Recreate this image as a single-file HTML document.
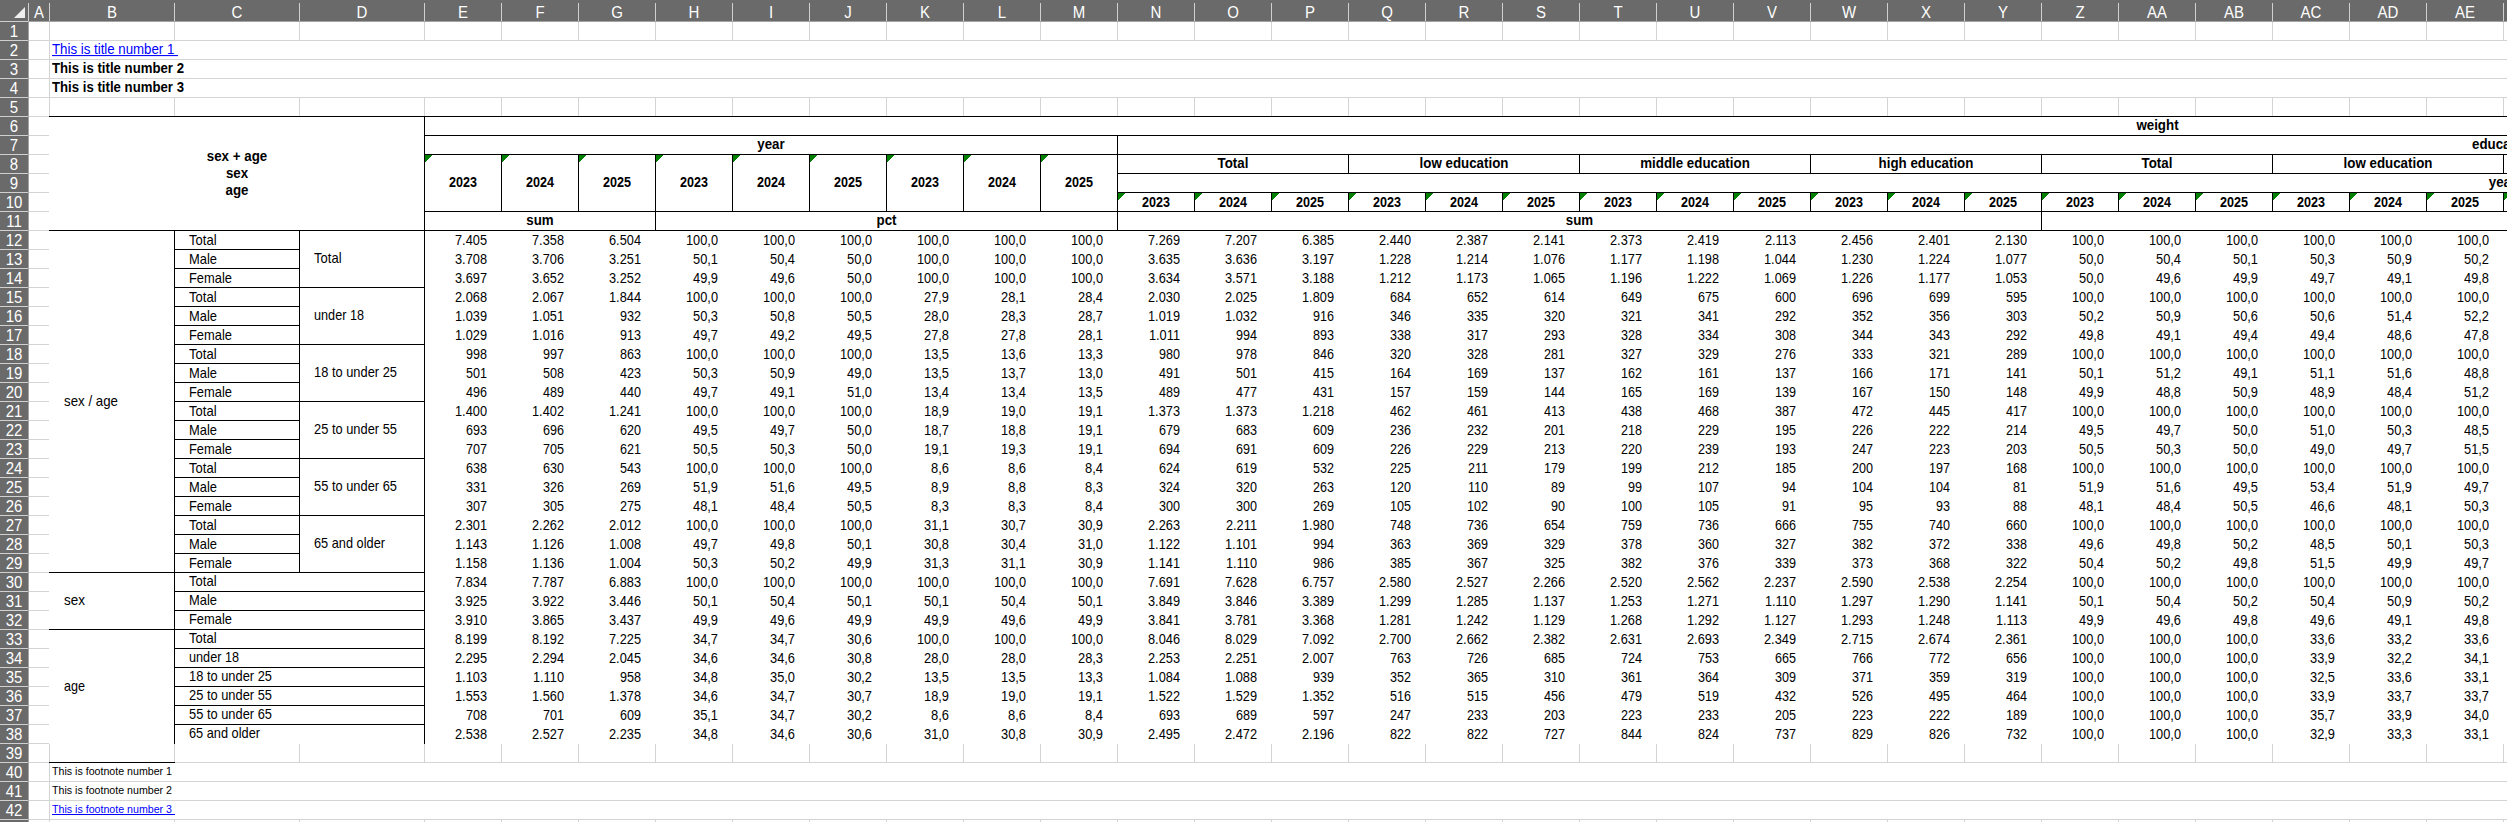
<!DOCTYPE html>
<html><head><meta charset="utf-8"><title>Sheet</title><style>
html,body{margin:0;padding:0}
body{width:2507px;height:822px;position:relative;overflow:hidden;background:#fff;font-family:"Liberation Sans",sans-serif}
i,b{position:absolute;display:block}
i.g{background:#d4d4d4}i.w{background:#fff}i.h{background:#6a6a6a}i.l{background:#d0d0d0}i.m{background:#a3a3a3}i.k{background:#000}
b{white-space:nowrap;line-height:19px;height:19px;font-weight:normal;color:#000;font-size:13.33px}
b.hd{font-size:15px;color:#fff;text-align:center;transform:scaleY(1.05);transform-origin:50% 15px}
b.fn{font-size:10.8px}
b.lk{color:#00f}
b.bd,b.bn{font-weight:bold}
b.ol{transform-origin:0 14px}b.oc{transform-origin:50% 14px}b.or{transform-origin:100% 14px}
b.c{text-align:center}
b.rt{width:86px;text-align:right}
u{text-decoration:underline}
</style></head><body>
<i class="g" style="left:29px;top:40px;width:2478px;height:1px"></i><i class="g" style="left:29px;top:59px;width:2478px;height:1px"></i><i class="g" style="left:29px;top:78px;width:2478px;height:1px"></i><i class="g" style="left:29px;top:97px;width:2478px;height:1px"></i><i class="g" style="left:29px;top:116px;width:2478px;height:1px"></i><i class="g" style="left:29px;top:135px;width:2478px;height:1px"></i><i class="g" style="left:29px;top:154px;width:2478px;height:1px"></i><i class="g" style="left:29px;top:173px;width:2478px;height:1px"></i><i class="g" style="left:29px;top:192px;width:2478px;height:1px"></i><i class="g" style="left:29px;top:211px;width:2478px;height:1px"></i><i class="g" style="left:29px;top:230px;width:2478px;height:1px"></i><i class="g" style="left:29px;top:249px;width:2478px;height:1px"></i><i class="g" style="left:29px;top:268px;width:2478px;height:1px"></i><i class="g" style="left:29px;top:287px;width:2478px;height:1px"></i><i class="g" style="left:29px;top:306px;width:2478px;height:1px"></i><i class="g" style="left:29px;top:325px;width:2478px;height:1px"></i><i class="g" style="left:29px;top:344px;width:2478px;height:1px"></i><i class="g" style="left:29px;top:363px;width:2478px;height:1px"></i><i class="g" style="left:29px;top:382px;width:2478px;height:1px"></i><i class="g" style="left:29px;top:401px;width:2478px;height:1px"></i><i class="g" style="left:29px;top:420px;width:2478px;height:1px"></i><i class="g" style="left:29px;top:439px;width:2478px;height:1px"></i><i class="g" style="left:29px;top:458px;width:2478px;height:1px"></i><i class="g" style="left:29px;top:477px;width:2478px;height:1px"></i><i class="g" style="left:29px;top:496px;width:2478px;height:1px"></i><i class="g" style="left:29px;top:515px;width:2478px;height:1px"></i><i class="g" style="left:29px;top:534px;width:2478px;height:1px"></i><i class="g" style="left:29px;top:553px;width:2478px;height:1px"></i><i class="g" style="left:29px;top:572px;width:2478px;height:1px"></i><i class="g" style="left:29px;top:591px;width:2478px;height:1px"></i><i class="g" style="left:29px;top:610px;width:2478px;height:1px"></i><i class="g" style="left:29px;top:629px;width:2478px;height:1px"></i><i class="g" style="left:29px;top:648px;width:2478px;height:1px"></i><i class="g" style="left:29px;top:667px;width:2478px;height:1px"></i><i class="g" style="left:29px;top:686px;width:2478px;height:1px"></i><i class="g" style="left:29px;top:705px;width:2478px;height:1px"></i><i class="g" style="left:29px;top:724px;width:2478px;height:1px"></i><i class="g" style="left:29px;top:743px;width:2478px;height:1px"></i><i class="g" style="left:29px;top:762px;width:2478px;height:1px"></i><i class="g" style="left:29px;top:781px;width:2478px;height:1px"></i><i class="g" style="left:29px;top:800px;width:2478px;height:1px"></i><i class="g" style="left:29px;top:819px;width:2478px;height:1px"></i><i class="g" style="left:29px;top:838px;width:2478px;height:1px"></i><i class="g" style="left:49px;top:22px;width:1px;height:800px"></i><i class="g" style="left:174px;top:22px;width:1px;height:800px"></i><i class="g" style="left:299px;top:22px;width:1px;height:800px"></i><i class="g" style="left:424px;top:22px;width:1px;height:800px"></i><i class="g" style="left:501px;top:22px;width:1px;height:800px"></i><i class="g" style="left:578px;top:22px;width:1px;height:800px"></i><i class="g" style="left:655px;top:22px;width:1px;height:800px"></i><i class="g" style="left:732px;top:22px;width:1px;height:800px"></i><i class="g" style="left:809px;top:22px;width:1px;height:800px"></i><i class="g" style="left:886px;top:22px;width:1px;height:800px"></i><i class="g" style="left:963px;top:22px;width:1px;height:800px"></i><i class="g" style="left:1040px;top:22px;width:1px;height:800px"></i><i class="g" style="left:1117px;top:22px;width:1px;height:800px"></i><i class="g" style="left:1194px;top:22px;width:1px;height:800px"></i><i class="g" style="left:1271px;top:22px;width:1px;height:800px"></i><i class="g" style="left:1348px;top:22px;width:1px;height:800px"></i><i class="g" style="left:1425px;top:22px;width:1px;height:800px"></i><i class="g" style="left:1502px;top:22px;width:1px;height:800px"></i><i class="g" style="left:1579px;top:22px;width:1px;height:800px"></i><i class="g" style="left:1656px;top:22px;width:1px;height:800px"></i><i class="g" style="left:1733px;top:22px;width:1px;height:800px"></i><i class="g" style="left:1810px;top:22px;width:1px;height:800px"></i><i class="g" style="left:1887px;top:22px;width:1px;height:800px"></i><i class="g" style="left:1964px;top:22px;width:1px;height:800px"></i><i class="g" style="left:2041px;top:22px;width:1px;height:800px"></i><i class="g" style="left:2118px;top:22px;width:1px;height:800px"></i><i class="g" style="left:2195px;top:22px;width:1px;height:800px"></i><i class="g" style="left:2272px;top:22px;width:1px;height:800px"></i><i class="g" style="left:2349px;top:22px;width:1px;height:800px"></i><i class="g" style="left:2426px;top:22px;width:1px;height:800px"></i><i class="g" style="left:2503px;top:22px;width:1px;height:800px"></i><i class="w" style="left:50px;top:41px;width:2457px;height:56px"></i><i class="g" style="left:50px;top:59px;width:2457px;height:1px"></i><i class="g" style="left:50px;top:78px;width:2457px;height:1px"></i><i class="w" style="left:49px;top:117px;width:2458px;height:627px"></i><i class="w" style="left:50px;top:763px;width:2457px;height:56px"></i><i class="g" style="left:50px;top:781px;width:2457px;height:1px"></i><i class="g" style="left:50px;top:800px;width:2457px;height:1px"></i><i class="h" style="left:0px;top:0px;width:2507px;height:21px"></i><i class="h" style="left:0px;top:0px;width:28px;height:822px"></i><i class="l" style="left:0px;top:21px;width:28px;height:1px"></i><i class="m" style="left:28px;top:21px;width:2479px;height:1px"></i><i class="l" style="left:28px;top:3px;width:1px;height:18px"></i><i class="m" style="left:28px;top:21px;width:1px;height:801px"></i><i class="l" style="left:49px;top:3px;width:1px;height:18px"></i><i class="l" style="left:174px;top:3px;width:1px;height:18px"></i><i class="l" style="left:299px;top:3px;width:1px;height:18px"></i><i class="l" style="left:424px;top:3px;width:1px;height:18px"></i><i class="l" style="left:501px;top:3px;width:1px;height:18px"></i><i class="l" style="left:578px;top:3px;width:1px;height:18px"></i><i class="l" style="left:655px;top:3px;width:1px;height:18px"></i><i class="l" style="left:732px;top:3px;width:1px;height:18px"></i><i class="l" style="left:809px;top:3px;width:1px;height:18px"></i><i class="l" style="left:886px;top:3px;width:1px;height:18px"></i><i class="l" style="left:963px;top:3px;width:1px;height:18px"></i><i class="l" style="left:1040px;top:3px;width:1px;height:18px"></i><i class="l" style="left:1117px;top:3px;width:1px;height:18px"></i><i class="l" style="left:1194px;top:3px;width:1px;height:18px"></i><i class="l" style="left:1271px;top:3px;width:1px;height:18px"></i><i class="l" style="left:1348px;top:3px;width:1px;height:18px"></i><i class="l" style="left:1425px;top:3px;width:1px;height:18px"></i><i class="l" style="left:1502px;top:3px;width:1px;height:18px"></i><i class="l" style="left:1579px;top:3px;width:1px;height:18px"></i><i class="l" style="left:1656px;top:3px;width:1px;height:18px"></i><i class="l" style="left:1733px;top:3px;width:1px;height:18px"></i><i class="l" style="left:1810px;top:3px;width:1px;height:18px"></i><i class="l" style="left:1887px;top:3px;width:1px;height:18px"></i><i class="l" style="left:1964px;top:3px;width:1px;height:18px"></i><i class="l" style="left:2041px;top:3px;width:1px;height:18px"></i><i class="l" style="left:2118px;top:3px;width:1px;height:18px"></i><i class="l" style="left:2195px;top:3px;width:1px;height:18px"></i><i class="l" style="left:2272px;top:3px;width:1px;height:18px"></i><i class="l" style="left:2349px;top:3px;width:1px;height:18px"></i><i class="l" style="left:2426px;top:3px;width:1px;height:18px"></i><i class="l" style="left:2503px;top:3px;width:1px;height:18px"></i><i class="l" style="left:0px;top:40px;width:28px;height:1px"></i><i class="l" style="left:0px;top:59px;width:28px;height:1px"></i><i class="l" style="left:0px;top:78px;width:28px;height:1px"></i><i class="l" style="left:0px;top:97px;width:28px;height:1px"></i><i class="l" style="left:0px;top:116px;width:28px;height:1px"></i><i class="l" style="left:0px;top:135px;width:28px;height:1px"></i><i class="l" style="left:0px;top:154px;width:28px;height:1px"></i><i class="l" style="left:0px;top:173px;width:28px;height:1px"></i><i class="l" style="left:0px;top:192px;width:28px;height:1px"></i><i class="l" style="left:0px;top:211px;width:28px;height:1px"></i><i class="l" style="left:0px;top:230px;width:28px;height:1px"></i><i class="l" style="left:0px;top:249px;width:28px;height:1px"></i><i class="l" style="left:0px;top:268px;width:28px;height:1px"></i><i class="l" style="left:0px;top:287px;width:28px;height:1px"></i><i class="l" style="left:0px;top:306px;width:28px;height:1px"></i><i class="l" style="left:0px;top:325px;width:28px;height:1px"></i><i class="l" style="left:0px;top:344px;width:28px;height:1px"></i><i class="l" style="left:0px;top:363px;width:28px;height:1px"></i><i class="l" style="left:0px;top:382px;width:28px;height:1px"></i><i class="l" style="left:0px;top:401px;width:28px;height:1px"></i><i class="l" style="left:0px;top:420px;width:28px;height:1px"></i><i class="l" style="left:0px;top:439px;width:28px;height:1px"></i><i class="l" style="left:0px;top:458px;width:28px;height:1px"></i><i class="l" style="left:0px;top:477px;width:28px;height:1px"></i><i class="l" style="left:0px;top:496px;width:28px;height:1px"></i><i class="l" style="left:0px;top:515px;width:28px;height:1px"></i><i class="l" style="left:0px;top:534px;width:28px;height:1px"></i><i class="l" style="left:0px;top:553px;width:28px;height:1px"></i><i class="l" style="left:0px;top:572px;width:28px;height:1px"></i><i class="l" style="left:0px;top:591px;width:28px;height:1px"></i><i class="l" style="left:0px;top:610px;width:28px;height:1px"></i><i class="l" style="left:0px;top:629px;width:28px;height:1px"></i><i class="l" style="left:0px;top:648px;width:28px;height:1px"></i><i class="l" style="left:0px;top:667px;width:28px;height:1px"></i><i class="l" style="left:0px;top:686px;width:28px;height:1px"></i><i class="l" style="left:0px;top:705px;width:28px;height:1px"></i><i class="l" style="left:0px;top:724px;width:28px;height:1px"></i><i class="l" style="left:0px;top:743px;width:28px;height:1px"></i><i class="l" style="left:0px;top:762px;width:28px;height:1px"></i><i class="l" style="left:0px;top:781px;width:28px;height:1px"></i><i class="l" style="left:0px;top:800px;width:28px;height:1px"></i><i class="l" style="left:0px;top:819px;width:28px;height:1px"></i><i class="l" style="left:0px;top:838px;width:28px;height:1px"></i><i class="k" style="left:49px;top:116px;width:2458px;height:1px"></i><i class="k" style="left:424px;top:116px;width:1px;height:115px"></i><i class="k" style="left:49px;top:230px;width:2458px;height:1px"></i><i class="k" style="left:424px;top:135px;width:2083px;height:1px"></i><i class="k" style="left:424px;top:154px;width:2083px;height:1px"></i><i class="k" style="left:1117px;top:135px;width:1px;height:96px"></i><i class="k" style="left:501px;top:154px;width:1px;height:58px"></i><i class="k" style="left:578px;top:154px;width:1px;height:58px"></i><i class="k" style="left:655px;top:154px;width:1px;height:58px"></i><i class="k" style="left:732px;top:154px;width:1px;height:58px"></i><i class="k" style="left:809px;top:154px;width:1px;height:58px"></i><i class="k" style="left:886px;top:154px;width:1px;height:58px"></i><i class="k" style="left:963px;top:154px;width:1px;height:58px"></i><i class="k" style="left:1040px;top:154px;width:1px;height:58px"></i><i class="k" style="left:1117px;top:154px;width:1px;height:58px"></i><i class="k" style="left:424px;top:211px;width:2083px;height:1px"></i><i class="k" style="left:1117px;top:173px;width:1390px;height:1px"></i><i class="k" style="left:1348px;top:154px;width:1px;height:20px"></i><i class="k" style="left:1579px;top:154px;width:1px;height:20px"></i><i class="k" style="left:1810px;top:154px;width:1px;height:20px"></i><i class="k" style="left:2041px;top:154px;width:1px;height:20px"></i><i class="k" style="left:2272px;top:154px;width:1px;height:20px"></i><i class="k" style="left:2503px;top:154px;width:1px;height:20px"></i><i class="k" style="left:1117px;top:192px;width:1390px;height:1px"></i><i class="k" style="left:1194px;top:192px;width:1px;height:20px"></i><i class="k" style="left:1271px;top:192px;width:1px;height:20px"></i><i class="k" style="left:1348px;top:192px;width:1px;height:20px"></i><i class="k" style="left:1425px;top:192px;width:1px;height:20px"></i><i class="k" style="left:1502px;top:192px;width:1px;height:20px"></i><i class="k" style="left:1579px;top:192px;width:1px;height:20px"></i><i class="k" style="left:1656px;top:192px;width:1px;height:20px"></i><i class="k" style="left:1733px;top:192px;width:1px;height:20px"></i><i class="k" style="left:1810px;top:192px;width:1px;height:20px"></i><i class="k" style="left:1887px;top:192px;width:1px;height:20px"></i><i class="k" style="left:1964px;top:192px;width:1px;height:20px"></i><i class="k" style="left:2041px;top:192px;width:1px;height:20px"></i><i class="k" style="left:2118px;top:192px;width:1px;height:20px"></i><i class="k" style="left:2195px;top:192px;width:1px;height:20px"></i><i class="k" style="left:2272px;top:192px;width:1px;height:20px"></i><i class="k" style="left:2349px;top:192px;width:1px;height:20px"></i><i class="k" style="left:2426px;top:192px;width:1px;height:20px"></i><i class="k" style="left:2503px;top:192px;width:1px;height:20px"></i><i class="k" style="left:655px;top:211px;width:1px;height:20px"></i><i class="k" style="left:2041px;top:211px;width:1px;height:20px"></i><i class="k" style="left:174px;top:230px;width:1px;height:514px"></i><i class="k" style="left:424px;top:230px;width:1px;height:514px"></i><i class="k" style="left:299px;top:230px;width:1px;height:343px"></i><i class="k" style="left:174px;top:249px;width:126px;height:1px"></i><i class="k" style="left:174px;top:268px;width:126px;height:1px"></i><i class="k" style="left:174px;top:287px;width:126px;height:1px"></i><i class="k" style="left:174px;top:306px;width:126px;height:1px"></i><i class="k" style="left:174px;top:325px;width:126px;height:1px"></i><i class="k" style="left:174px;top:344px;width:126px;height:1px"></i><i class="k" style="left:174px;top:363px;width:126px;height:1px"></i><i class="k" style="left:174px;top:382px;width:126px;height:1px"></i><i class="k" style="left:174px;top:401px;width:126px;height:1px"></i><i class="k" style="left:174px;top:420px;width:126px;height:1px"></i><i class="k" style="left:174px;top:439px;width:126px;height:1px"></i><i class="k" style="left:174px;top:458px;width:126px;height:1px"></i><i class="k" style="left:174px;top:477px;width:126px;height:1px"></i><i class="k" style="left:174px;top:496px;width:126px;height:1px"></i><i class="k" style="left:174px;top:515px;width:126px;height:1px"></i><i class="k" style="left:174px;top:534px;width:126px;height:1px"></i><i class="k" style="left:174px;top:553px;width:126px;height:1px"></i><i class="k" style="left:174px;top:572px;width:126px;height:1px"></i><i class="k" style="left:299px;top:287px;width:126px;height:1px"></i><i class="k" style="left:299px;top:344px;width:126px;height:1px"></i><i class="k" style="left:299px;top:401px;width:126px;height:1px"></i><i class="k" style="left:299px;top:458px;width:126px;height:1px"></i><i class="k" style="left:299px;top:515px;width:126px;height:1px"></i><i class="k" style="left:299px;top:572px;width:126px;height:1px"></i><i class="k" style="left:49px;top:572px;width:126px;height:1px"></i><i class="k" style="left:174px;top:591px;width:251px;height:1px"></i><i class="k" style="left:174px;top:610px;width:251px;height:1px"></i><i class="k" style="left:174px;top:629px;width:251px;height:1px"></i><i class="k" style="left:49px;top:629px;width:126px;height:1px"></i><i class="k" style="left:174px;top:648px;width:251px;height:1px"></i><i class="k" style="left:174px;top:667px;width:251px;height:1px"></i><i class="k" style="left:174px;top:686px;width:251px;height:1px"></i><i class="k" style="left:174px;top:705px;width:251px;height:1px"></i><i class="k" style="left:174px;top:724px;width:251px;height:1px"></i><i class="k" style="left:49px;top:762px;width:126px;height:1px"></i>
<b class="hd" style="left:29px;top:3px;width:20px;">A</b><b class="hd" style="left:50px;top:3px;width:124px;">B</b><b class="hd" style="left:175px;top:3px;width:124px;">C</b><b class="hd" style="left:300px;top:3px;width:124px;">D</b><b class="hd" style="left:425px;top:3px;width:76px;">E</b><b class="hd" style="left:502px;top:3px;width:76px;">F</b><b class="hd" style="left:579px;top:3px;width:76px;">G</b><b class="hd" style="left:656px;top:3px;width:76px;">H</b><b class="hd" style="left:733px;top:3px;width:76px;">I</b><b class="hd" style="left:810px;top:3px;width:76px;">J</b><b class="hd" style="left:887px;top:3px;width:76px;">K</b><b class="hd" style="left:964px;top:3px;width:76px;">L</b><b class="hd" style="left:1041px;top:3px;width:76px;">M</b><b class="hd" style="left:1118px;top:3px;width:76px;">N</b><b class="hd" style="left:1195px;top:3px;width:76px;">O</b><b class="hd" style="left:1272px;top:3px;width:76px;">P</b><b class="hd" style="left:1349px;top:3px;width:76px;">Q</b><b class="hd" style="left:1426px;top:3px;width:76px;">R</b><b class="hd" style="left:1503px;top:3px;width:76px;">S</b><b class="hd" style="left:1580px;top:3px;width:76px;">T</b><b class="hd" style="left:1657px;top:3px;width:76px;">U</b><b class="hd" style="left:1734px;top:3px;width:76px;">V</b><b class="hd" style="left:1811px;top:3px;width:76px;">W</b><b class="hd" style="left:1888px;top:3px;width:76px;">X</b><b class="hd" style="left:1965px;top:3px;width:76px;">Y</b><b class="hd" style="left:2042px;top:3px;width:76px;">Z</b><b class="hd" style="left:2119px;top:3px;width:76px;">AA</b><b class="hd" style="left:2196px;top:3px;width:76px;">AB</b><b class="hd" style="left:2273px;top:3px;width:76px;">AC</b><b class="hd" style="left:2350px;top:3px;width:76px;">AD</b><b class="hd" style="left:2427px;top:3px;width:76px;">AE</b><b class="hd" style="left:0px;top:22px;width:28px;">1</b><b class="hd" style="left:0px;top:41px;width:28px;">2</b><b class="hd" style="left:0px;top:60px;width:28px;">3</b><b class="hd" style="left:0px;top:79px;width:28px;">4</b><b class="hd" style="left:0px;top:98px;width:28px;">5</b><b class="hd" style="left:0px;top:117px;width:28px;">6</b><b class="hd" style="left:0px;top:136px;width:28px;">7</b><b class="hd" style="left:0px;top:155px;width:28px;">8</b><b class="hd" style="left:0px;top:174px;width:28px;">9</b><b class="hd" style="left:0px;top:193px;width:28px;">10</b><b class="hd" style="left:0px;top:212px;width:28px;">11</b><b class="hd" style="left:0px;top:231px;width:28px;">12</b><b class="hd" style="left:0px;top:250px;width:28px;">13</b><b class="hd" style="left:0px;top:269px;width:28px;">14</b><b class="hd" style="left:0px;top:288px;width:28px;">15</b><b class="hd" style="left:0px;top:307px;width:28px;">16</b><b class="hd" style="left:0px;top:326px;width:28px;">17</b><b class="hd" style="left:0px;top:345px;width:28px;">18</b><b class="hd" style="left:0px;top:364px;width:28px;">19</b><b class="hd" style="left:0px;top:383px;width:28px;">20</b><b class="hd" style="left:0px;top:402px;width:28px;">21</b><b class="hd" style="left:0px;top:421px;width:28px;">22</b><b class="hd" style="left:0px;top:440px;width:28px;">23</b><b class="hd" style="left:0px;top:459px;width:28px;">24</b><b class="hd" style="left:0px;top:478px;width:28px;">25</b><b class="hd" style="left:0px;top:497px;width:28px;">26</b><b class="hd" style="left:0px;top:516px;width:28px;">27</b><b class="hd" style="left:0px;top:535px;width:28px;">28</b><b class="hd" style="left:0px;top:554px;width:28px;">29</b><b class="hd" style="left:0px;top:573px;width:28px;">30</b><b class="hd" style="left:0px;top:592px;width:28px;">31</b><b class="hd" style="left:0px;top:611px;width:28px;">32</b><b class="hd" style="left:0px;top:630px;width:28px;">33</b><b class="hd" style="left:0px;top:649px;width:28px;">34</b><b class="hd" style="left:0px;top:668px;width:28px;">35</b><b class="hd" style="left:0px;top:687px;width:28px;">36</b><b class="hd" style="left:0px;top:706px;width:28px;">37</b><b class="hd" style="left:0px;top:725px;width:28px;">38</b><b class="hd" style="left:0px;top:744px;width:28px;">39</b><b class="hd" style="left:0px;top:763px;width:28px;">40</b><b class="hd" style="left:0px;top:782px;width:28px;">41</b><b class="hd" style="left:0px;top:801px;width:28px;">42</b><b class="hd" style="left:0px;top:820px;width:28px;">43</b><svg style="position:absolute;left:0;top:0" width="28" height="21"><polygon points="25,7 25,18 14,18" fill="#efefef"/></svg><b class="t r ol lk" style="left:52px;top:40px;transform:scale(0.995,1.05);"><u>This is title number 1&nbsp;</u></b><b class="t bd ol" style="left:52px;top:59px;transform:scale(0.990,1.05);">This is title number 2</b><b class="t bd ol" style="left:52px;top:78px;transform:scale(0.990,1.05);">This is title number 3</b><svg style="position:absolute;left:425px;top:155px" width="7" height="7" shape-rendering="crispEdges"><polygon points="0,0 7,0 0,7" fill="#008000"/></svg><svg style="position:absolute;left:502px;top:155px" width="7" height="7" shape-rendering="crispEdges"><polygon points="0,0 7,0 0,7" fill="#008000"/></svg><svg style="position:absolute;left:579px;top:155px" width="7" height="7" shape-rendering="crispEdges"><polygon points="0,0 7,0 0,7" fill="#008000"/></svg><svg style="position:absolute;left:656px;top:155px" width="7" height="7" shape-rendering="crispEdges"><polygon points="0,0 7,0 0,7" fill="#008000"/></svg><svg style="position:absolute;left:733px;top:155px" width="7" height="7" shape-rendering="crispEdges"><polygon points="0,0 7,0 0,7" fill="#008000"/></svg><svg style="position:absolute;left:810px;top:155px" width="7" height="7" shape-rendering="crispEdges"><polygon points="0,0 7,0 0,7" fill="#008000"/></svg><svg style="position:absolute;left:887px;top:155px" width="7" height="7" shape-rendering="crispEdges"><polygon points="0,0 7,0 0,7" fill="#008000"/></svg><svg style="position:absolute;left:964px;top:155px" width="7" height="7" shape-rendering="crispEdges"><polygon points="0,0 7,0 0,7" fill="#008000"/></svg><svg style="position:absolute;left:1041px;top:155px" width="7" height="7" shape-rendering="crispEdges"><polygon points="0,0 7,0 0,7" fill="#008000"/></svg><svg style="position:absolute;left:1118px;top:193px" width="7" height="7" shape-rendering="crispEdges"><polygon points="0,0 7,0 0,7" fill="#008000"/></svg><svg style="position:absolute;left:1195px;top:193px" width="7" height="7" shape-rendering="crispEdges"><polygon points="0,0 7,0 0,7" fill="#008000"/></svg><svg style="position:absolute;left:1272px;top:193px" width="7" height="7" shape-rendering="crispEdges"><polygon points="0,0 7,0 0,7" fill="#008000"/></svg><svg style="position:absolute;left:1349px;top:193px" width="7" height="7" shape-rendering="crispEdges"><polygon points="0,0 7,0 0,7" fill="#008000"/></svg><svg style="position:absolute;left:1426px;top:193px" width="7" height="7" shape-rendering="crispEdges"><polygon points="0,0 7,0 0,7" fill="#008000"/></svg><svg style="position:absolute;left:1503px;top:193px" width="7" height="7" shape-rendering="crispEdges"><polygon points="0,0 7,0 0,7" fill="#008000"/></svg><svg style="position:absolute;left:1580px;top:193px" width="7" height="7" shape-rendering="crispEdges"><polygon points="0,0 7,0 0,7" fill="#008000"/></svg><svg style="position:absolute;left:1657px;top:193px" width="7" height="7" shape-rendering="crispEdges"><polygon points="0,0 7,0 0,7" fill="#008000"/></svg><svg style="position:absolute;left:1734px;top:193px" width="7" height="7" shape-rendering="crispEdges"><polygon points="0,0 7,0 0,7" fill="#008000"/></svg><svg style="position:absolute;left:1811px;top:193px" width="7" height="7" shape-rendering="crispEdges"><polygon points="0,0 7,0 0,7" fill="#008000"/></svg><svg style="position:absolute;left:1888px;top:193px" width="7" height="7" shape-rendering="crispEdges"><polygon points="0,0 7,0 0,7" fill="#008000"/></svg><svg style="position:absolute;left:1965px;top:193px" width="7" height="7" shape-rendering="crispEdges"><polygon points="0,0 7,0 0,7" fill="#008000"/></svg><svg style="position:absolute;left:2042px;top:193px" width="7" height="7" shape-rendering="crispEdges"><polygon points="0,0 7,0 0,7" fill="#008000"/></svg><svg style="position:absolute;left:2119px;top:193px" width="7" height="7" shape-rendering="crispEdges"><polygon points="0,0 7,0 0,7" fill="#008000"/></svg><svg style="position:absolute;left:2196px;top:193px" width="7" height="7" shape-rendering="crispEdges"><polygon points="0,0 7,0 0,7" fill="#008000"/></svg><svg style="position:absolute;left:2273px;top:193px" width="7" height="7" shape-rendering="crispEdges"><polygon points="0,0 7,0 0,7" fill="#008000"/></svg><svg style="position:absolute;left:2350px;top:193px" width="7" height="7" shape-rendering="crispEdges"><polygon points="0,0 7,0 0,7" fill="#008000"/></svg><svg style="position:absolute;left:2427px;top:193px" width="7" height="7" shape-rendering="crispEdges"><polygon points="0,0 7,0 0,7" fill="#008000"/></svg><svg style="position:absolute;left:2504px;top:193px" width="7" height="7" shape-rendering="crispEdges"><polygon points="0,0 7,0 0,7" fill="#008000"/></svg><b class="t bd oc c" style="left:50px;top:147px;width:374px;transform:scale(1.000,1.05);">sex + age</b><b class="t bd oc c" style="left:50px;top:164px;width:374px;transform:scale(1.000,1.05);">sex</b><b class="t bd oc c" style="left:50px;top:181px;width:374px;transform:scale(1.000,1.05);">age</b><b class="t bd oc c" style="left:425px;top:116px;width:3465px;transform:scale(1.000,1.05);">weight</b><b class="t bd oc c" style="left:425px;top:135px;width:692px;transform:scale(1.000,1.05);">year</b><b class="t bd oc c" style="left:1118px;top:135px;width:2771px;transform:scale(1.000,1.05);">education</b><b class="t bn oc c" style="left:425px;top:173px;width:76px;transform:scale(0.944,1.05);">2023</b><b class="t bn oc c" style="left:502px;top:173px;width:76px;transform:scale(0.944,1.05);">2024</b><b class="t bn oc c" style="left:579px;top:173px;width:76px;transform:scale(0.944,1.05);">2025</b><b class="t bn oc c" style="left:656px;top:173px;width:76px;transform:scale(0.944,1.05);">2023</b><b class="t bn oc c" style="left:733px;top:173px;width:76px;transform:scale(0.944,1.05);">2024</b><b class="t bn oc c" style="left:810px;top:173px;width:76px;transform:scale(0.944,1.05);">2025</b><b class="t bn oc c" style="left:887px;top:173px;width:76px;transform:scale(0.944,1.05);">2023</b><b class="t bn oc c" style="left:964px;top:173px;width:76px;transform:scale(0.944,1.05);">2024</b><b class="t bn oc c" style="left:1041px;top:173px;width:76px;transform:scale(0.944,1.05);">2025</b><b class="t bd oc c" style="left:1118px;top:154px;width:230px;transform:scale(1.000,1.05);">Total</b><b class="t bd oc c" style="left:1349px;top:154px;width:230px;transform:scale(1.000,1.05);">low education</b><b class="t bd oc c" style="left:1580px;top:154px;width:230px;transform:scale(1.000,1.05);">middle education</b><b class="t bd oc c" style="left:1811px;top:154px;width:230px;transform:scale(1.000,1.05);">high education</b><b class="t bd oc c" style="left:2042px;top:154px;width:230px;transform:scale(1.000,1.05);">Total</b><b class="t bd oc c" style="left:2273px;top:154px;width:230px;transform:scale(1.000,1.05);">low education</b><b class="t bd oc c" style="left:2504px;top:154px;width:230px;transform:scale(1.000,1.05);">middle education</b><b class="t bd oc c" style="left:1118px;top:173px;width:2769px;transform:scale(1.000,1.05);">year</b><b class="t bn oc c" style="left:1118px;top:193px;width:76px;transform:scale(0.944,1.05);">2023</b><b class="t bn oc c" style="left:1195px;top:193px;width:76px;transform:scale(0.944,1.05);">2024</b><b class="t bn oc c" style="left:1272px;top:193px;width:76px;transform:scale(0.944,1.05);">2025</b><b class="t bn oc c" style="left:1349px;top:193px;width:76px;transform:scale(0.944,1.05);">2023</b><b class="t bn oc c" style="left:1426px;top:193px;width:76px;transform:scale(0.944,1.05);">2024</b><b class="t bn oc c" style="left:1503px;top:193px;width:76px;transform:scale(0.944,1.05);">2025</b><b class="t bn oc c" style="left:1580px;top:193px;width:76px;transform:scale(0.944,1.05);">2023</b><b class="t bn oc c" style="left:1657px;top:193px;width:76px;transform:scale(0.944,1.05);">2024</b><b class="t bn oc c" style="left:1734px;top:193px;width:76px;transform:scale(0.944,1.05);">2025</b><b class="t bn oc c" style="left:1811px;top:193px;width:76px;transform:scale(0.944,1.05);">2023</b><b class="t bn oc c" style="left:1888px;top:193px;width:76px;transform:scale(0.944,1.05);">2024</b><b class="t bn oc c" style="left:1965px;top:193px;width:76px;transform:scale(0.944,1.05);">2025</b><b class="t bn oc c" style="left:2042px;top:193px;width:76px;transform:scale(0.944,1.05);">2023</b><b class="t bn oc c" style="left:2119px;top:193px;width:76px;transform:scale(0.944,1.05);">2024</b><b class="t bn oc c" style="left:2196px;top:193px;width:76px;transform:scale(0.944,1.05);">2025</b><b class="t bn oc c" style="left:2273px;top:193px;width:76px;transform:scale(0.944,1.05);">2023</b><b class="t bn oc c" style="left:2350px;top:193px;width:76px;transform:scale(0.944,1.05);">2024</b><b class="t bn oc c" style="left:2427px;top:193px;width:76px;transform:scale(0.944,1.05);">2025</b><b class="t bd oc c" style="left:425px;top:211px;width:230px;transform:scale(1.000,1.05);">sum</b><b class="t bd oc c" style="left:656px;top:211px;width:461px;transform:scale(1.000,1.05);">pct</b><b class="t bd oc c" style="left:1118px;top:211px;width:923px;transform:scale(1.000,1.05);">sum</b><b class="t r ol" style="left:64px;top:392px;transform:scale(0.998,1.05);">sex / age</b><b class="t r ol" style="left:64px;top:591px;transform:scale(1.012,1.05);">sex</b><b class="t r ol" style="left:64px;top:677px;transform:scale(0.944,1.05);">age</b><b class="t r ol" style="left:189px;top:231px;transform:scale(0.979,1.05);">Total</b><b class="t r ol" style="left:189px;top:250px;transform:scale(0.969,1.05);">Male</b><b class="t r ol" style="left:189px;top:269px;transform:scale(0.967,1.05);">Female</b><b class="t r ol" style="left:314px;top:249px;transform:scale(0.979,1.05);">Total</b><b class="t r ol" style="left:189px;top:288px;transform:scale(0.979,1.05);">Total</b><b class="t r ol" style="left:189px;top:307px;transform:scale(0.969,1.05);">Male</b><b class="t r ol" style="left:189px;top:326px;transform:scale(0.967,1.05);">Female</b><b class="t r ol" style="left:314px;top:306px;transform:scale(0.950,1.05);">under 18</b><b class="t r ol" style="left:189px;top:345px;transform:scale(0.979,1.05);">Total</b><b class="t r ol" style="left:189px;top:364px;transform:scale(0.969,1.05);">Male</b><b class="t r ol" style="left:189px;top:383px;transform:scale(0.967,1.05);">Female</b><b class="t r ol" style="left:314px;top:363px;transform:scale(0.965,1.05);">18 to under 25</b><b class="t r ol" style="left:189px;top:402px;transform:scale(0.979,1.05);">Total</b><b class="t r ol" style="left:189px;top:421px;transform:scale(0.969,1.05);">Male</b><b class="t r ol" style="left:189px;top:440px;transform:scale(0.967,1.05);">Female</b><b class="t r ol" style="left:314px;top:420px;transform:scale(0.965,1.05);">25 to under 55</b><b class="t r ol" style="left:189px;top:459px;transform:scale(0.979,1.05);">Total</b><b class="t r ol" style="left:189px;top:478px;transform:scale(0.969,1.05);">Male</b><b class="t r ol" style="left:189px;top:497px;transform:scale(0.967,1.05);">Female</b><b class="t r ol" style="left:314px;top:477px;transform:scale(0.965,1.05);">55 to under 65</b><b class="t r ol" style="left:189px;top:516px;transform:scale(0.979,1.05);">Total</b><b class="t r ol" style="left:189px;top:535px;transform:scale(0.969,1.05);">Male</b><b class="t r ol" style="left:189px;top:554px;transform:scale(0.967,1.05);">Female</b><b class="t r ol" style="left:314px;top:534px;transform:scale(0.958,1.05);">65 and older</b><b class="t r ol" style="left:189px;top:572px;transform:scale(0.979,1.05);">Total</b><b class="t r ol" style="left:189px;top:591px;transform:scale(0.969,1.05);">Male</b><b class="t r ol" style="left:189px;top:610px;transform:scale(0.967,1.05);">Female</b><b class="t r ol" style="left:189px;top:629px;transform:scale(0.979,1.05);">Total</b><b class="t r ol" style="left:189px;top:648px;transform:scale(0.950,1.05);">under 18</b><b class="t r ol" style="left:189px;top:667px;transform:scale(0.965,1.05);">18 to under 25</b><b class="t r ol" style="left:189px;top:686px;transform:scale(0.965,1.05);">25 to under 55</b><b class="t r ol" style="left:189px;top:705px;transform:scale(0.965,1.05);">55 to under 65</b><b class="t r ol" style="left:189px;top:724px;transform:scale(0.958,1.05);">65 and older</b><b class="t n or rt" style="left:401px;top:231px;transform:scale(0.959,1.05);">7.405</b><b class="t n or rt" style="left:478px;top:231px;transform:scale(0.959,1.05);">7.358</b><b class="t n or rt" style="left:555px;top:231px;transform:scale(0.959,1.05);">6.504</b><b class="t n or rt" style="left:632px;top:231px;transform:scale(0.959,1.05);">100,0</b><b class="t n or rt" style="left:709px;top:231px;transform:scale(0.959,1.05);">100,0</b><b class="t n or rt" style="left:786px;top:231px;transform:scale(0.959,1.05);">100,0</b><b class="t n or rt" style="left:863px;top:231px;transform:scale(0.959,1.05);">100,0</b><b class="t n or rt" style="left:940px;top:231px;transform:scale(0.959,1.05);">100,0</b><b class="t n or rt" style="left:1017px;top:231px;transform:scale(0.959,1.05);">100,0</b><b class="t n or rt" style="left:1094px;top:231px;transform:scale(0.959,1.05);">7.269</b><b class="t n or rt" style="left:1171px;top:231px;transform:scale(0.959,1.05);">7.207</b><b class="t n or rt" style="left:1248px;top:231px;transform:scale(0.959,1.05);">6.385</b><b class="t n or rt" style="left:1325px;top:231px;transform:scale(0.959,1.05);">2.440</b><b class="t n or rt" style="left:1402px;top:231px;transform:scale(0.959,1.05);">2.387</b><b class="t n or rt" style="left:1479px;top:231px;transform:scale(0.959,1.05);">2.141</b><b class="t n or rt" style="left:1556px;top:231px;transform:scale(0.959,1.05);">2.373</b><b class="t n or rt" style="left:1633px;top:231px;transform:scale(0.959,1.05);">2.419</b><b class="t n or rt" style="left:1710px;top:231px;transform:scale(0.959,1.05);">2.113</b><b class="t n or rt" style="left:1787px;top:231px;transform:scale(0.959,1.05);">2.456</b><b class="t n or rt" style="left:1864px;top:231px;transform:scale(0.959,1.05);">2.401</b><b class="t n or rt" style="left:1941px;top:231px;transform:scale(0.959,1.05);">2.130</b><b class="t n or rt" style="left:2018px;top:231px;transform:scale(0.959,1.05);">100,0</b><b class="t n or rt" style="left:2095px;top:231px;transform:scale(0.959,1.05);">100,0</b><b class="t n or rt" style="left:2172px;top:231px;transform:scale(0.959,1.05);">100,0</b><b class="t n or rt" style="left:2249px;top:231px;transform:scale(0.959,1.05);">100,0</b><b class="t n or rt" style="left:2326px;top:231px;transform:scale(0.959,1.05);">100,0</b><b class="t n or rt" style="left:2403px;top:231px;transform:scale(0.959,1.05);">100,0</b><b class="t n or rt" style="left:401px;top:250px;transform:scale(0.959,1.05);">3.708</b><b class="t n or rt" style="left:478px;top:250px;transform:scale(0.959,1.05);">3.706</b><b class="t n or rt" style="left:555px;top:250px;transform:scale(0.959,1.05);">3.251</b><b class="t n or rt" style="left:632px;top:250px;transform:scale(0.964,1.05);">50,1</b><b class="t n or rt" style="left:709px;top:250px;transform:scale(0.964,1.05);">50,4</b><b class="t n or rt" style="left:786px;top:250px;transform:scale(0.964,1.05);">50,0</b><b class="t n or rt" style="left:863px;top:250px;transform:scale(0.959,1.05);">100,0</b><b class="t n or rt" style="left:940px;top:250px;transform:scale(0.959,1.05);">100,0</b><b class="t n or rt" style="left:1017px;top:250px;transform:scale(0.959,1.05);">100,0</b><b class="t n or rt" style="left:1094px;top:250px;transform:scale(0.959,1.05);">3.635</b><b class="t n or rt" style="left:1171px;top:250px;transform:scale(0.959,1.05);">3.636</b><b class="t n or rt" style="left:1248px;top:250px;transform:scale(0.959,1.05);">3.197</b><b class="t n or rt" style="left:1325px;top:250px;transform:scale(0.959,1.05);">1.228</b><b class="t n or rt" style="left:1402px;top:250px;transform:scale(0.959,1.05);">1.214</b><b class="t n or rt" style="left:1479px;top:250px;transform:scale(0.959,1.05);">1.076</b><b class="t n or rt" style="left:1556px;top:250px;transform:scale(0.959,1.05);">1.177</b><b class="t n or rt" style="left:1633px;top:250px;transform:scale(0.959,1.05);">1.198</b><b class="t n or rt" style="left:1710px;top:250px;transform:scale(0.959,1.05);">1.044</b><b class="t n or rt" style="left:1787px;top:250px;transform:scale(0.959,1.05);">1.230</b><b class="t n or rt" style="left:1864px;top:250px;transform:scale(0.959,1.05);">1.224</b><b class="t n or rt" style="left:1941px;top:250px;transform:scale(0.959,1.05);">1.077</b><b class="t n or rt" style="left:2018px;top:250px;transform:scale(0.964,1.05);">50,0</b><b class="t n or rt" style="left:2095px;top:250px;transform:scale(0.964,1.05);">50,4</b><b class="t n or rt" style="left:2172px;top:250px;transform:scale(0.964,1.05);">50,1</b><b class="t n or rt" style="left:2249px;top:250px;transform:scale(0.964,1.05);">50,3</b><b class="t n or rt" style="left:2326px;top:250px;transform:scale(0.964,1.05);">50,9</b><b class="t n or rt" style="left:2403px;top:250px;transform:scale(0.964,1.05);">50,2</b><b class="t n or rt" style="left:401px;top:269px;transform:scale(0.959,1.05);">3.697</b><b class="t n or rt" style="left:478px;top:269px;transform:scale(0.959,1.05);">3.652</b><b class="t n or rt" style="left:555px;top:269px;transform:scale(0.959,1.05);">3.252</b><b class="t n or rt" style="left:632px;top:269px;transform:scale(0.964,1.05);">49,9</b><b class="t n or rt" style="left:709px;top:269px;transform:scale(0.964,1.05);">49,6</b><b class="t n or rt" style="left:786px;top:269px;transform:scale(0.964,1.05);">50,0</b><b class="t n or rt" style="left:863px;top:269px;transform:scale(0.959,1.05);">100,0</b><b class="t n or rt" style="left:940px;top:269px;transform:scale(0.959,1.05);">100,0</b><b class="t n or rt" style="left:1017px;top:269px;transform:scale(0.959,1.05);">100,0</b><b class="t n or rt" style="left:1094px;top:269px;transform:scale(0.959,1.05);">3.634</b><b class="t n or rt" style="left:1171px;top:269px;transform:scale(0.959,1.05);">3.571</b><b class="t n or rt" style="left:1248px;top:269px;transform:scale(0.959,1.05);">3.188</b><b class="t n or rt" style="left:1325px;top:269px;transform:scale(0.959,1.05);">1.212</b><b class="t n or rt" style="left:1402px;top:269px;transform:scale(0.959,1.05);">1.173</b><b class="t n or rt" style="left:1479px;top:269px;transform:scale(0.959,1.05);">1.065</b><b class="t n or rt" style="left:1556px;top:269px;transform:scale(0.959,1.05);">1.196</b><b class="t n or rt" style="left:1633px;top:269px;transform:scale(0.959,1.05);">1.222</b><b class="t n or rt" style="left:1710px;top:269px;transform:scale(0.959,1.05);">1.069</b><b class="t n or rt" style="left:1787px;top:269px;transform:scale(0.959,1.05);">1.226</b><b class="t n or rt" style="left:1864px;top:269px;transform:scale(0.959,1.05);">1.177</b><b class="t n or rt" style="left:1941px;top:269px;transform:scale(0.959,1.05);">1.053</b><b class="t n or rt" style="left:2018px;top:269px;transform:scale(0.964,1.05);">50,0</b><b class="t n or rt" style="left:2095px;top:269px;transform:scale(0.964,1.05);">49,6</b><b class="t n or rt" style="left:2172px;top:269px;transform:scale(0.964,1.05);">49,9</b><b class="t n or rt" style="left:2249px;top:269px;transform:scale(0.964,1.05);">49,7</b><b class="t n or rt" style="left:2326px;top:269px;transform:scale(0.964,1.05);">49,1</b><b class="t n or rt" style="left:2403px;top:269px;transform:scale(0.964,1.05);">49,8</b><b class="t n or rt" style="left:401px;top:288px;transform:scale(0.959,1.05);">2.068</b><b class="t n or rt" style="left:478px;top:288px;transform:scale(0.959,1.05);">2.067</b><b class="t n or rt" style="left:555px;top:288px;transform:scale(0.959,1.05);">1.844</b><b class="t n or rt" style="left:632px;top:288px;transform:scale(0.959,1.05);">100,0</b><b class="t n or rt" style="left:709px;top:288px;transform:scale(0.959,1.05);">100,0</b><b class="t n or rt" style="left:786px;top:288px;transform:scale(0.959,1.05);">100,0</b><b class="t n or rt" style="left:863px;top:288px;transform:scale(0.964,1.05);">27,9</b><b class="t n or rt" style="left:940px;top:288px;transform:scale(0.964,1.05);">28,1</b><b class="t n or rt" style="left:1017px;top:288px;transform:scale(0.964,1.05);">28,4</b><b class="t n or rt" style="left:1094px;top:288px;transform:scale(0.959,1.05);">2.030</b><b class="t n or rt" style="left:1171px;top:288px;transform:scale(0.959,1.05);">2.025</b><b class="t n or rt" style="left:1248px;top:288px;transform:scale(0.959,1.05);">1.809</b><b class="t n or rt" style="left:1325px;top:288px;transform:scale(0.944,1.05);">684</b><b class="t n or rt" style="left:1402px;top:288px;transform:scale(0.944,1.05);">652</b><b class="t n or rt" style="left:1479px;top:288px;transform:scale(0.944,1.05);">614</b><b class="t n or rt" style="left:1556px;top:288px;transform:scale(0.944,1.05);">649</b><b class="t n or rt" style="left:1633px;top:288px;transform:scale(0.944,1.05);">675</b><b class="t n or rt" style="left:1710px;top:288px;transform:scale(0.944,1.05);">600</b><b class="t n or rt" style="left:1787px;top:288px;transform:scale(0.944,1.05);">696</b><b class="t n or rt" style="left:1864px;top:288px;transform:scale(0.944,1.05);">699</b><b class="t n or rt" style="left:1941px;top:288px;transform:scale(0.944,1.05);">595</b><b class="t n or rt" style="left:2018px;top:288px;transform:scale(0.959,1.05);">100,0</b><b class="t n or rt" style="left:2095px;top:288px;transform:scale(0.959,1.05);">100,0</b><b class="t n or rt" style="left:2172px;top:288px;transform:scale(0.959,1.05);">100,0</b><b class="t n or rt" style="left:2249px;top:288px;transform:scale(0.959,1.05);">100,0</b><b class="t n or rt" style="left:2326px;top:288px;transform:scale(0.959,1.05);">100,0</b><b class="t n or rt" style="left:2403px;top:288px;transform:scale(0.959,1.05);">100,0</b><b class="t n or rt" style="left:401px;top:307px;transform:scale(0.959,1.05);">1.039</b><b class="t n or rt" style="left:478px;top:307px;transform:scale(0.959,1.05);">1.051</b><b class="t n or rt" style="left:555px;top:307px;transform:scale(0.944,1.05);">932</b><b class="t n or rt" style="left:632px;top:307px;transform:scale(0.964,1.05);">50,3</b><b class="t n or rt" style="left:709px;top:307px;transform:scale(0.964,1.05);">50,8</b><b class="t n or rt" style="left:786px;top:307px;transform:scale(0.964,1.05);">50,5</b><b class="t n or rt" style="left:863px;top:307px;transform:scale(0.964,1.05);">28,0</b><b class="t n or rt" style="left:940px;top:307px;transform:scale(0.964,1.05);">28,3</b><b class="t n or rt" style="left:1017px;top:307px;transform:scale(0.964,1.05);">28,7</b><b class="t n or rt" style="left:1094px;top:307px;transform:scale(0.959,1.05);">1.019</b><b class="t n or rt" style="left:1171px;top:307px;transform:scale(0.959,1.05);">1.032</b><b class="t n or rt" style="left:1248px;top:307px;transform:scale(0.944,1.05);">916</b><b class="t n or rt" style="left:1325px;top:307px;transform:scale(0.944,1.05);">346</b><b class="t n or rt" style="left:1402px;top:307px;transform:scale(0.944,1.05);">335</b><b class="t n or rt" style="left:1479px;top:307px;transform:scale(0.944,1.05);">320</b><b class="t n or rt" style="left:1556px;top:307px;transform:scale(0.944,1.05);">321</b><b class="t n or rt" style="left:1633px;top:307px;transform:scale(0.944,1.05);">341</b><b class="t n or rt" style="left:1710px;top:307px;transform:scale(0.944,1.05);">292</b><b class="t n or rt" style="left:1787px;top:307px;transform:scale(0.944,1.05);">352</b><b class="t n or rt" style="left:1864px;top:307px;transform:scale(0.944,1.05);">356</b><b class="t n or rt" style="left:1941px;top:307px;transform:scale(0.944,1.05);">303</b><b class="t n or rt" style="left:2018px;top:307px;transform:scale(0.964,1.05);">50,2</b><b class="t n or rt" style="left:2095px;top:307px;transform:scale(0.964,1.05);">50,9</b><b class="t n or rt" style="left:2172px;top:307px;transform:scale(0.964,1.05);">50,6</b><b class="t n or rt" style="left:2249px;top:307px;transform:scale(0.964,1.05);">50,6</b><b class="t n or rt" style="left:2326px;top:307px;transform:scale(0.964,1.05);">51,4</b><b class="t n or rt" style="left:2403px;top:307px;transform:scale(0.964,1.05);">52,2</b><b class="t n or rt" style="left:401px;top:326px;transform:scale(0.959,1.05);">1.029</b><b class="t n or rt" style="left:478px;top:326px;transform:scale(0.959,1.05);">1.016</b><b class="t n or rt" style="left:555px;top:326px;transform:scale(0.944,1.05);">913</b><b class="t n or rt" style="left:632px;top:326px;transform:scale(0.964,1.05);">49,7</b><b class="t n or rt" style="left:709px;top:326px;transform:scale(0.964,1.05);">49,2</b><b class="t n or rt" style="left:786px;top:326px;transform:scale(0.964,1.05);">49,5</b><b class="t n or rt" style="left:863px;top:326px;transform:scale(0.964,1.05);">27,8</b><b class="t n or rt" style="left:940px;top:326px;transform:scale(0.964,1.05);">27,8</b><b class="t n or rt" style="left:1017px;top:326px;transform:scale(0.964,1.05);">28,1</b><b class="t n or rt" style="left:1094px;top:326px;transform:scale(0.959,1.05);">1.011</b><b class="t n or rt" style="left:1171px;top:326px;transform:scale(0.944,1.05);">994</b><b class="t n or rt" style="left:1248px;top:326px;transform:scale(0.944,1.05);">893</b><b class="t n or rt" style="left:1325px;top:326px;transform:scale(0.944,1.05);">338</b><b class="t n or rt" style="left:1402px;top:326px;transform:scale(0.944,1.05);">317</b><b class="t n or rt" style="left:1479px;top:326px;transform:scale(0.944,1.05);">293</b><b class="t n or rt" style="left:1556px;top:326px;transform:scale(0.944,1.05);">328</b><b class="t n or rt" style="left:1633px;top:326px;transform:scale(0.944,1.05);">334</b><b class="t n or rt" style="left:1710px;top:326px;transform:scale(0.944,1.05);">308</b><b class="t n or rt" style="left:1787px;top:326px;transform:scale(0.944,1.05);">344</b><b class="t n or rt" style="left:1864px;top:326px;transform:scale(0.944,1.05);">343</b><b class="t n or rt" style="left:1941px;top:326px;transform:scale(0.944,1.05);">292</b><b class="t n or rt" style="left:2018px;top:326px;transform:scale(0.964,1.05);">49,8</b><b class="t n or rt" style="left:2095px;top:326px;transform:scale(0.964,1.05);">49,1</b><b class="t n or rt" style="left:2172px;top:326px;transform:scale(0.964,1.05);">49,4</b><b class="t n or rt" style="left:2249px;top:326px;transform:scale(0.964,1.05);">49,4</b><b class="t n or rt" style="left:2326px;top:326px;transform:scale(0.964,1.05);">48,6</b><b class="t n or rt" style="left:2403px;top:326px;transform:scale(0.964,1.05);">47,8</b><b class="t n or rt" style="left:401px;top:345px;transform:scale(0.944,1.05);">998</b><b class="t n or rt" style="left:478px;top:345px;transform:scale(0.944,1.05);">997</b><b class="t n or rt" style="left:555px;top:345px;transform:scale(0.944,1.05);">863</b><b class="t n or rt" style="left:632px;top:345px;transform:scale(0.959,1.05);">100,0</b><b class="t n or rt" style="left:709px;top:345px;transform:scale(0.959,1.05);">100,0</b><b class="t n or rt" style="left:786px;top:345px;transform:scale(0.959,1.05);">100,0</b><b class="t n or rt" style="left:863px;top:345px;transform:scale(0.964,1.05);">13,5</b><b class="t n or rt" style="left:940px;top:345px;transform:scale(0.964,1.05);">13,6</b><b class="t n or rt" style="left:1017px;top:345px;transform:scale(0.964,1.05);">13,3</b><b class="t n or rt" style="left:1094px;top:345px;transform:scale(0.944,1.05);">980</b><b class="t n or rt" style="left:1171px;top:345px;transform:scale(0.944,1.05);">978</b><b class="t n or rt" style="left:1248px;top:345px;transform:scale(0.944,1.05);">846</b><b class="t n or rt" style="left:1325px;top:345px;transform:scale(0.944,1.05);">320</b><b class="t n or rt" style="left:1402px;top:345px;transform:scale(0.944,1.05);">328</b><b class="t n or rt" style="left:1479px;top:345px;transform:scale(0.944,1.05);">281</b><b class="t n or rt" style="left:1556px;top:345px;transform:scale(0.944,1.05);">327</b><b class="t n or rt" style="left:1633px;top:345px;transform:scale(0.944,1.05);">329</b><b class="t n or rt" style="left:1710px;top:345px;transform:scale(0.944,1.05);">276</b><b class="t n or rt" style="left:1787px;top:345px;transform:scale(0.944,1.05);">333</b><b class="t n or rt" style="left:1864px;top:345px;transform:scale(0.944,1.05);">321</b><b class="t n or rt" style="left:1941px;top:345px;transform:scale(0.944,1.05);">289</b><b class="t n or rt" style="left:2018px;top:345px;transform:scale(0.959,1.05);">100,0</b><b class="t n or rt" style="left:2095px;top:345px;transform:scale(0.959,1.05);">100,0</b><b class="t n or rt" style="left:2172px;top:345px;transform:scale(0.959,1.05);">100,0</b><b class="t n or rt" style="left:2249px;top:345px;transform:scale(0.959,1.05);">100,0</b><b class="t n or rt" style="left:2326px;top:345px;transform:scale(0.959,1.05);">100,0</b><b class="t n or rt" style="left:2403px;top:345px;transform:scale(0.959,1.05);">100,0</b><b class="t n or rt" style="left:401px;top:364px;transform:scale(0.944,1.05);">501</b><b class="t n or rt" style="left:478px;top:364px;transform:scale(0.944,1.05);">508</b><b class="t n or rt" style="left:555px;top:364px;transform:scale(0.944,1.05);">423</b><b class="t n or rt" style="left:632px;top:364px;transform:scale(0.964,1.05);">50,3</b><b class="t n or rt" style="left:709px;top:364px;transform:scale(0.964,1.05);">50,9</b><b class="t n or rt" style="left:786px;top:364px;transform:scale(0.964,1.05);">49,0</b><b class="t n or rt" style="left:863px;top:364px;transform:scale(0.964,1.05);">13,5</b><b class="t n or rt" style="left:940px;top:364px;transform:scale(0.964,1.05);">13,7</b><b class="t n or rt" style="left:1017px;top:364px;transform:scale(0.964,1.05);">13,0</b><b class="t n or rt" style="left:1094px;top:364px;transform:scale(0.944,1.05);">491</b><b class="t n or rt" style="left:1171px;top:364px;transform:scale(0.944,1.05);">501</b><b class="t n or rt" style="left:1248px;top:364px;transform:scale(0.944,1.05);">415</b><b class="t n or rt" style="left:1325px;top:364px;transform:scale(0.944,1.05);">164</b><b class="t n or rt" style="left:1402px;top:364px;transform:scale(0.944,1.05);">169</b><b class="t n or rt" style="left:1479px;top:364px;transform:scale(0.944,1.05);">137</b><b class="t n or rt" style="left:1556px;top:364px;transform:scale(0.944,1.05);">162</b><b class="t n or rt" style="left:1633px;top:364px;transform:scale(0.944,1.05);">161</b><b class="t n or rt" style="left:1710px;top:364px;transform:scale(0.944,1.05);">137</b><b class="t n or rt" style="left:1787px;top:364px;transform:scale(0.944,1.05);">166</b><b class="t n or rt" style="left:1864px;top:364px;transform:scale(0.944,1.05);">171</b><b class="t n or rt" style="left:1941px;top:364px;transform:scale(0.944,1.05);">141</b><b class="t n or rt" style="left:2018px;top:364px;transform:scale(0.964,1.05);">50,1</b><b class="t n or rt" style="left:2095px;top:364px;transform:scale(0.964,1.05);">51,2</b><b class="t n or rt" style="left:2172px;top:364px;transform:scale(0.964,1.05);">49,1</b><b class="t n or rt" style="left:2249px;top:364px;transform:scale(0.964,1.05);">51,1</b><b class="t n or rt" style="left:2326px;top:364px;transform:scale(0.964,1.05);">51,6</b><b class="t n or rt" style="left:2403px;top:364px;transform:scale(0.964,1.05);">48,8</b><b class="t n or rt" style="left:401px;top:383px;transform:scale(0.944,1.05);">496</b><b class="t n or rt" style="left:478px;top:383px;transform:scale(0.944,1.05);">489</b><b class="t n or rt" style="left:555px;top:383px;transform:scale(0.944,1.05);">440</b><b class="t n or rt" style="left:632px;top:383px;transform:scale(0.964,1.05);">49,7</b><b class="t n or rt" style="left:709px;top:383px;transform:scale(0.964,1.05);">49,1</b><b class="t n or rt" style="left:786px;top:383px;transform:scale(0.964,1.05);">51,0</b><b class="t n or rt" style="left:863px;top:383px;transform:scale(0.964,1.05);">13,4</b><b class="t n or rt" style="left:940px;top:383px;transform:scale(0.964,1.05);">13,4</b><b class="t n or rt" style="left:1017px;top:383px;transform:scale(0.964,1.05);">13,5</b><b class="t n or rt" style="left:1094px;top:383px;transform:scale(0.944,1.05);">489</b><b class="t n or rt" style="left:1171px;top:383px;transform:scale(0.944,1.05);">477</b><b class="t n or rt" style="left:1248px;top:383px;transform:scale(0.944,1.05);">431</b><b class="t n or rt" style="left:1325px;top:383px;transform:scale(0.944,1.05);">157</b><b class="t n or rt" style="left:1402px;top:383px;transform:scale(0.944,1.05);">159</b><b class="t n or rt" style="left:1479px;top:383px;transform:scale(0.944,1.05);">144</b><b class="t n or rt" style="left:1556px;top:383px;transform:scale(0.944,1.05);">165</b><b class="t n or rt" style="left:1633px;top:383px;transform:scale(0.944,1.05);">169</b><b class="t n or rt" style="left:1710px;top:383px;transform:scale(0.944,1.05);">139</b><b class="t n or rt" style="left:1787px;top:383px;transform:scale(0.944,1.05);">167</b><b class="t n or rt" style="left:1864px;top:383px;transform:scale(0.944,1.05);">150</b><b class="t n or rt" style="left:1941px;top:383px;transform:scale(0.944,1.05);">148</b><b class="t n or rt" style="left:2018px;top:383px;transform:scale(0.964,1.05);">49,9</b><b class="t n or rt" style="left:2095px;top:383px;transform:scale(0.964,1.05);">48,8</b><b class="t n or rt" style="left:2172px;top:383px;transform:scale(0.964,1.05);">50,9</b><b class="t n or rt" style="left:2249px;top:383px;transform:scale(0.964,1.05);">48,9</b><b class="t n or rt" style="left:2326px;top:383px;transform:scale(0.964,1.05);">48,4</b><b class="t n or rt" style="left:2403px;top:383px;transform:scale(0.964,1.05);">51,2</b><b class="t n or rt" style="left:401px;top:402px;transform:scale(0.959,1.05);">1.400</b><b class="t n or rt" style="left:478px;top:402px;transform:scale(0.959,1.05);">1.402</b><b class="t n or rt" style="left:555px;top:402px;transform:scale(0.959,1.05);">1.241</b><b class="t n or rt" style="left:632px;top:402px;transform:scale(0.959,1.05);">100,0</b><b class="t n or rt" style="left:709px;top:402px;transform:scale(0.959,1.05);">100,0</b><b class="t n or rt" style="left:786px;top:402px;transform:scale(0.959,1.05);">100,0</b><b class="t n or rt" style="left:863px;top:402px;transform:scale(0.964,1.05);">18,9</b><b class="t n or rt" style="left:940px;top:402px;transform:scale(0.964,1.05);">19,0</b><b class="t n or rt" style="left:1017px;top:402px;transform:scale(0.964,1.05);">19,1</b><b class="t n or rt" style="left:1094px;top:402px;transform:scale(0.959,1.05);">1.373</b><b class="t n or rt" style="left:1171px;top:402px;transform:scale(0.959,1.05);">1.373</b><b class="t n or rt" style="left:1248px;top:402px;transform:scale(0.959,1.05);">1.218</b><b class="t n or rt" style="left:1325px;top:402px;transform:scale(0.944,1.05);">462</b><b class="t n or rt" style="left:1402px;top:402px;transform:scale(0.944,1.05);">461</b><b class="t n or rt" style="left:1479px;top:402px;transform:scale(0.944,1.05);">413</b><b class="t n or rt" style="left:1556px;top:402px;transform:scale(0.944,1.05);">438</b><b class="t n or rt" style="left:1633px;top:402px;transform:scale(0.944,1.05);">468</b><b class="t n or rt" style="left:1710px;top:402px;transform:scale(0.944,1.05);">387</b><b class="t n or rt" style="left:1787px;top:402px;transform:scale(0.944,1.05);">472</b><b class="t n or rt" style="left:1864px;top:402px;transform:scale(0.944,1.05);">445</b><b class="t n or rt" style="left:1941px;top:402px;transform:scale(0.944,1.05);">417</b><b class="t n or rt" style="left:2018px;top:402px;transform:scale(0.959,1.05);">100,0</b><b class="t n or rt" style="left:2095px;top:402px;transform:scale(0.959,1.05);">100,0</b><b class="t n or rt" style="left:2172px;top:402px;transform:scale(0.959,1.05);">100,0</b><b class="t n or rt" style="left:2249px;top:402px;transform:scale(0.959,1.05);">100,0</b><b class="t n or rt" style="left:2326px;top:402px;transform:scale(0.959,1.05);">100,0</b><b class="t n or rt" style="left:2403px;top:402px;transform:scale(0.959,1.05);">100,0</b><b class="t n or rt" style="left:401px;top:421px;transform:scale(0.944,1.05);">693</b><b class="t n or rt" style="left:478px;top:421px;transform:scale(0.944,1.05);">696</b><b class="t n or rt" style="left:555px;top:421px;transform:scale(0.944,1.05);">620</b><b class="t n or rt" style="left:632px;top:421px;transform:scale(0.964,1.05);">49,5</b><b class="t n or rt" style="left:709px;top:421px;transform:scale(0.964,1.05);">49,7</b><b class="t n or rt" style="left:786px;top:421px;transform:scale(0.964,1.05);">50,0</b><b class="t n or rt" style="left:863px;top:421px;transform:scale(0.964,1.05);">18,7</b><b class="t n or rt" style="left:940px;top:421px;transform:scale(0.964,1.05);">18,8</b><b class="t n or rt" style="left:1017px;top:421px;transform:scale(0.964,1.05);">19,1</b><b class="t n or rt" style="left:1094px;top:421px;transform:scale(0.944,1.05);">679</b><b class="t n or rt" style="left:1171px;top:421px;transform:scale(0.944,1.05);">683</b><b class="t n or rt" style="left:1248px;top:421px;transform:scale(0.944,1.05);">609</b><b class="t n or rt" style="left:1325px;top:421px;transform:scale(0.944,1.05);">236</b><b class="t n or rt" style="left:1402px;top:421px;transform:scale(0.944,1.05);">232</b><b class="t n or rt" style="left:1479px;top:421px;transform:scale(0.944,1.05);">201</b><b class="t n or rt" style="left:1556px;top:421px;transform:scale(0.944,1.05);">218</b><b class="t n or rt" style="left:1633px;top:421px;transform:scale(0.944,1.05);">229</b><b class="t n or rt" style="left:1710px;top:421px;transform:scale(0.944,1.05);">195</b><b class="t n or rt" style="left:1787px;top:421px;transform:scale(0.944,1.05);">226</b><b class="t n or rt" style="left:1864px;top:421px;transform:scale(0.944,1.05);">222</b><b class="t n or rt" style="left:1941px;top:421px;transform:scale(0.944,1.05);">214</b><b class="t n or rt" style="left:2018px;top:421px;transform:scale(0.964,1.05);">49,5</b><b class="t n or rt" style="left:2095px;top:421px;transform:scale(0.964,1.05);">49,7</b><b class="t n or rt" style="left:2172px;top:421px;transform:scale(0.964,1.05);">50,0</b><b class="t n or rt" style="left:2249px;top:421px;transform:scale(0.964,1.05);">51,0</b><b class="t n or rt" style="left:2326px;top:421px;transform:scale(0.964,1.05);">50,3</b><b class="t n or rt" style="left:2403px;top:421px;transform:scale(0.964,1.05);">48,5</b><b class="t n or rt" style="left:401px;top:440px;transform:scale(0.944,1.05);">707</b><b class="t n or rt" style="left:478px;top:440px;transform:scale(0.944,1.05);">705</b><b class="t n or rt" style="left:555px;top:440px;transform:scale(0.944,1.05);">621</b><b class="t n or rt" style="left:632px;top:440px;transform:scale(0.964,1.05);">50,5</b><b class="t n or rt" style="left:709px;top:440px;transform:scale(0.964,1.05);">50,3</b><b class="t n or rt" style="left:786px;top:440px;transform:scale(0.964,1.05);">50,0</b><b class="t n or rt" style="left:863px;top:440px;transform:scale(0.964,1.05);">19,1</b><b class="t n or rt" style="left:940px;top:440px;transform:scale(0.964,1.05);">19,3</b><b class="t n or rt" style="left:1017px;top:440px;transform:scale(0.964,1.05);">19,1</b><b class="t n or rt" style="left:1094px;top:440px;transform:scale(0.944,1.05);">694</b><b class="t n or rt" style="left:1171px;top:440px;transform:scale(0.944,1.05);">691</b><b class="t n or rt" style="left:1248px;top:440px;transform:scale(0.944,1.05);">609</b><b class="t n or rt" style="left:1325px;top:440px;transform:scale(0.944,1.05);">226</b><b class="t n or rt" style="left:1402px;top:440px;transform:scale(0.944,1.05);">229</b><b class="t n or rt" style="left:1479px;top:440px;transform:scale(0.944,1.05);">213</b><b class="t n or rt" style="left:1556px;top:440px;transform:scale(0.944,1.05);">220</b><b class="t n or rt" style="left:1633px;top:440px;transform:scale(0.944,1.05);">239</b><b class="t n or rt" style="left:1710px;top:440px;transform:scale(0.944,1.05);">193</b><b class="t n or rt" style="left:1787px;top:440px;transform:scale(0.944,1.05);">247</b><b class="t n or rt" style="left:1864px;top:440px;transform:scale(0.944,1.05);">223</b><b class="t n or rt" style="left:1941px;top:440px;transform:scale(0.944,1.05);">203</b><b class="t n or rt" style="left:2018px;top:440px;transform:scale(0.964,1.05);">50,5</b><b class="t n or rt" style="left:2095px;top:440px;transform:scale(0.964,1.05);">50,3</b><b class="t n or rt" style="left:2172px;top:440px;transform:scale(0.964,1.05);">50,0</b><b class="t n or rt" style="left:2249px;top:440px;transform:scale(0.964,1.05);">49,0</b><b class="t n or rt" style="left:2326px;top:440px;transform:scale(0.964,1.05);">49,7</b><b class="t n or rt" style="left:2403px;top:440px;transform:scale(0.964,1.05);">51,5</b><b class="t n or rt" style="left:401px;top:459px;transform:scale(0.944,1.05);">638</b><b class="t n or rt" style="left:478px;top:459px;transform:scale(0.944,1.05);">630</b><b class="t n or rt" style="left:555px;top:459px;transform:scale(0.944,1.05);">543</b><b class="t n or rt" style="left:632px;top:459px;transform:scale(0.959,1.05);">100,0</b><b class="t n or rt" style="left:709px;top:459px;transform:scale(0.959,1.05);">100,0</b><b class="t n or rt" style="left:786px;top:459px;transform:scale(0.959,1.05);">100,0</b><b class="t n or rt" style="left:863px;top:459px;transform:scale(0.971,1.05);">8,6</b><b class="t n or rt" style="left:940px;top:459px;transform:scale(0.971,1.05);">8,6</b><b class="t n or rt" style="left:1017px;top:459px;transform:scale(0.971,1.05);">8,4</b><b class="t n or rt" style="left:1094px;top:459px;transform:scale(0.944,1.05);">624</b><b class="t n or rt" style="left:1171px;top:459px;transform:scale(0.944,1.05);">619</b><b class="t n or rt" style="left:1248px;top:459px;transform:scale(0.944,1.05);">532</b><b class="t n or rt" style="left:1325px;top:459px;transform:scale(0.944,1.05);">225</b><b class="t n or rt" style="left:1402px;top:459px;transform:scale(0.944,1.05);">211</b><b class="t n or rt" style="left:1479px;top:459px;transform:scale(0.944,1.05);">179</b><b class="t n or rt" style="left:1556px;top:459px;transform:scale(0.944,1.05);">199</b><b class="t n or rt" style="left:1633px;top:459px;transform:scale(0.944,1.05);">212</b><b class="t n or rt" style="left:1710px;top:459px;transform:scale(0.944,1.05);">185</b><b class="t n or rt" style="left:1787px;top:459px;transform:scale(0.944,1.05);">200</b><b class="t n or rt" style="left:1864px;top:459px;transform:scale(0.944,1.05);">197</b><b class="t n or rt" style="left:1941px;top:459px;transform:scale(0.944,1.05);">168</b><b class="t n or rt" style="left:2018px;top:459px;transform:scale(0.959,1.05);">100,0</b><b class="t n or rt" style="left:2095px;top:459px;transform:scale(0.959,1.05);">100,0</b><b class="t n or rt" style="left:2172px;top:459px;transform:scale(0.959,1.05);">100,0</b><b class="t n or rt" style="left:2249px;top:459px;transform:scale(0.959,1.05);">100,0</b><b class="t n or rt" style="left:2326px;top:459px;transform:scale(0.959,1.05);">100,0</b><b class="t n or rt" style="left:2403px;top:459px;transform:scale(0.959,1.05);">100,0</b><b class="t n or rt" style="left:401px;top:478px;transform:scale(0.944,1.05);">331</b><b class="t n or rt" style="left:478px;top:478px;transform:scale(0.944,1.05);">326</b><b class="t n or rt" style="left:555px;top:478px;transform:scale(0.944,1.05);">269</b><b class="t n or rt" style="left:632px;top:478px;transform:scale(0.964,1.05);">51,9</b><b class="t n or rt" style="left:709px;top:478px;transform:scale(0.964,1.05);">51,6</b><b class="t n or rt" style="left:786px;top:478px;transform:scale(0.964,1.05);">49,5</b><b class="t n or rt" style="left:863px;top:478px;transform:scale(0.971,1.05);">8,9</b><b class="t n or rt" style="left:940px;top:478px;transform:scale(0.971,1.05);">8,8</b><b class="t n or rt" style="left:1017px;top:478px;transform:scale(0.971,1.05);">8,3</b><b class="t n or rt" style="left:1094px;top:478px;transform:scale(0.944,1.05);">324</b><b class="t n or rt" style="left:1171px;top:478px;transform:scale(0.944,1.05);">320</b><b class="t n or rt" style="left:1248px;top:478px;transform:scale(0.944,1.05);">263</b><b class="t n or rt" style="left:1325px;top:478px;transform:scale(0.944,1.05);">120</b><b class="t n or rt" style="left:1402px;top:478px;transform:scale(0.944,1.05);">110</b><b class="t n or rt" style="left:1479px;top:478px;transform:scale(0.944,1.05);">89</b><b class="t n or rt" style="left:1556px;top:478px;transform:scale(0.944,1.05);">99</b><b class="t n or rt" style="left:1633px;top:478px;transform:scale(0.944,1.05);">107</b><b class="t n or rt" style="left:1710px;top:478px;transform:scale(0.944,1.05);">94</b><b class="t n or rt" style="left:1787px;top:478px;transform:scale(0.944,1.05);">104</b><b class="t n or rt" style="left:1864px;top:478px;transform:scale(0.944,1.05);">104</b><b class="t n or rt" style="left:1941px;top:478px;transform:scale(0.944,1.05);">81</b><b class="t n or rt" style="left:2018px;top:478px;transform:scale(0.964,1.05);">51,9</b><b class="t n or rt" style="left:2095px;top:478px;transform:scale(0.964,1.05);">51,6</b><b class="t n or rt" style="left:2172px;top:478px;transform:scale(0.964,1.05);">49,5</b><b class="t n or rt" style="left:2249px;top:478px;transform:scale(0.964,1.05);">53,4</b><b class="t n or rt" style="left:2326px;top:478px;transform:scale(0.964,1.05);">51,9</b><b class="t n or rt" style="left:2403px;top:478px;transform:scale(0.964,1.05);">49,7</b><b class="t n or rt" style="left:401px;top:497px;transform:scale(0.944,1.05);">307</b><b class="t n or rt" style="left:478px;top:497px;transform:scale(0.944,1.05);">305</b><b class="t n or rt" style="left:555px;top:497px;transform:scale(0.944,1.05);">275</b><b class="t n or rt" style="left:632px;top:497px;transform:scale(0.964,1.05);">48,1</b><b class="t n or rt" style="left:709px;top:497px;transform:scale(0.964,1.05);">48,4</b><b class="t n or rt" style="left:786px;top:497px;transform:scale(0.964,1.05);">50,5</b><b class="t n or rt" style="left:863px;top:497px;transform:scale(0.971,1.05);">8,3</b><b class="t n or rt" style="left:940px;top:497px;transform:scale(0.971,1.05);">8,3</b><b class="t n or rt" style="left:1017px;top:497px;transform:scale(0.971,1.05);">8,4</b><b class="t n or rt" style="left:1094px;top:497px;transform:scale(0.944,1.05);">300</b><b class="t n or rt" style="left:1171px;top:497px;transform:scale(0.944,1.05);">300</b><b class="t n or rt" style="left:1248px;top:497px;transform:scale(0.944,1.05);">269</b><b class="t n or rt" style="left:1325px;top:497px;transform:scale(0.944,1.05);">105</b><b class="t n or rt" style="left:1402px;top:497px;transform:scale(0.944,1.05);">102</b><b class="t n or rt" style="left:1479px;top:497px;transform:scale(0.944,1.05);">90</b><b class="t n or rt" style="left:1556px;top:497px;transform:scale(0.944,1.05);">100</b><b class="t n or rt" style="left:1633px;top:497px;transform:scale(0.944,1.05);">105</b><b class="t n or rt" style="left:1710px;top:497px;transform:scale(0.944,1.05);">91</b><b class="t n or rt" style="left:1787px;top:497px;transform:scale(0.944,1.05);">95</b><b class="t n or rt" style="left:1864px;top:497px;transform:scale(0.944,1.05);">93</b><b class="t n or rt" style="left:1941px;top:497px;transform:scale(0.944,1.05);">88</b><b class="t n or rt" style="left:2018px;top:497px;transform:scale(0.964,1.05);">48,1</b><b class="t n or rt" style="left:2095px;top:497px;transform:scale(0.964,1.05);">48,4</b><b class="t n or rt" style="left:2172px;top:497px;transform:scale(0.964,1.05);">50,5</b><b class="t n or rt" style="left:2249px;top:497px;transform:scale(0.964,1.05);">46,6</b><b class="t n or rt" style="left:2326px;top:497px;transform:scale(0.964,1.05);">48,1</b><b class="t n or rt" style="left:2403px;top:497px;transform:scale(0.964,1.05);">50,3</b><b class="t n or rt" style="left:401px;top:516px;transform:scale(0.959,1.05);">2.301</b><b class="t n or rt" style="left:478px;top:516px;transform:scale(0.959,1.05);">2.262</b><b class="t n or rt" style="left:555px;top:516px;transform:scale(0.959,1.05);">2.012</b><b class="t n or rt" style="left:632px;top:516px;transform:scale(0.959,1.05);">100,0</b><b class="t n or rt" style="left:709px;top:516px;transform:scale(0.959,1.05);">100,0</b><b class="t n or rt" style="left:786px;top:516px;transform:scale(0.959,1.05);">100,0</b><b class="t n or rt" style="left:863px;top:516px;transform:scale(0.964,1.05);">31,1</b><b class="t n or rt" style="left:940px;top:516px;transform:scale(0.964,1.05);">30,7</b><b class="t n or rt" style="left:1017px;top:516px;transform:scale(0.964,1.05);">30,9</b><b class="t n or rt" style="left:1094px;top:516px;transform:scale(0.959,1.05);">2.263</b><b class="t n or rt" style="left:1171px;top:516px;transform:scale(0.959,1.05);">2.211</b><b class="t n or rt" style="left:1248px;top:516px;transform:scale(0.959,1.05);">1.980</b><b class="t n or rt" style="left:1325px;top:516px;transform:scale(0.944,1.05);">748</b><b class="t n or rt" style="left:1402px;top:516px;transform:scale(0.944,1.05);">736</b><b class="t n or rt" style="left:1479px;top:516px;transform:scale(0.944,1.05);">654</b><b class="t n or rt" style="left:1556px;top:516px;transform:scale(0.944,1.05);">759</b><b class="t n or rt" style="left:1633px;top:516px;transform:scale(0.944,1.05);">736</b><b class="t n or rt" style="left:1710px;top:516px;transform:scale(0.944,1.05);">666</b><b class="t n or rt" style="left:1787px;top:516px;transform:scale(0.944,1.05);">755</b><b class="t n or rt" style="left:1864px;top:516px;transform:scale(0.944,1.05);">740</b><b class="t n or rt" style="left:1941px;top:516px;transform:scale(0.944,1.05);">660</b><b class="t n or rt" style="left:2018px;top:516px;transform:scale(0.959,1.05);">100,0</b><b class="t n or rt" style="left:2095px;top:516px;transform:scale(0.959,1.05);">100,0</b><b class="t n or rt" style="left:2172px;top:516px;transform:scale(0.959,1.05);">100,0</b><b class="t n or rt" style="left:2249px;top:516px;transform:scale(0.959,1.05);">100,0</b><b class="t n or rt" style="left:2326px;top:516px;transform:scale(0.959,1.05);">100,0</b><b class="t n or rt" style="left:2403px;top:516px;transform:scale(0.959,1.05);">100,0</b><b class="t n or rt" style="left:401px;top:535px;transform:scale(0.959,1.05);">1.143</b><b class="t n or rt" style="left:478px;top:535px;transform:scale(0.959,1.05);">1.126</b><b class="t n or rt" style="left:555px;top:535px;transform:scale(0.959,1.05);">1.008</b><b class="t n or rt" style="left:632px;top:535px;transform:scale(0.964,1.05);">49,7</b><b class="t n or rt" style="left:709px;top:535px;transform:scale(0.964,1.05);">49,8</b><b class="t n or rt" style="left:786px;top:535px;transform:scale(0.964,1.05);">50,1</b><b class="t n or rt" style="left:863px;top:535px;transform:scale(0.964,1.05);">30,8</b><b class="t n or rt" style="left:940px;top:535px;transform:scale(0.964,1.05);">30,4</b><b class="t n or rt" style="left:1017px;top:535px;transform:scale(0.964,1.05);">31,0</b><b class="t n or rt" style="left:1094px;top:535px;transform:scale(0.959,1.05);">1.122</b><b class="t n or rt" style="left:1171px;top:535px;transform:scale(0.959,1.05);">1.101</b><b class="t n or rt" style="left:1248px;top:535px;transform:scale(0.944,1.05);">994</b><b class="t n or rt" style="left:1325px;top:535px;transform:scale(0.944,1.05);">363</b><b class="t n or rt" style="left:1402px;top:535px;transform:scale(0.944,1.05);">369</b><b class="t n or rt" style="left:1479px;top:535px;transform:scale(0.944,1.05);">329</b><b class="t n or rt" style="left:1556px;top:535px;transform:scale(0.944,1.05);">378</b><b class="t n or rt" style="left:1633px;top:535px;transform:scale(0.944,1.05);">360</b><b class="t n or rt" style="left:1710px;top:535px;transform:scale(0.944,1.05);">327</b><b class="t n or rt" style="left:1787px;top:535px;transform:scale(0.944,1.05);">382</b><b class="t n or rt" style="left:1864px;top:535px;transform:scale(0.944,1.05);">372</b><b class="t n or rt" style="left:1941px;top:535px;transform:scale(0.944,1.05);">338</b><b class="t n or rt" style="left:2018px;top:535px;transform:scale(0.964,1.05);">49,6</b><b class="t n or rt" style="left:2095px;top:535px;transform:scale(0.964,1.05);">49,8</b><b class="t n or rt" style="left:2172px;top:535px;transform:scale(0.964,1.05);">50,2</b><b class="t n or rt" style="left:2249px;top:535px;transform:scale(0.964,1.05);">48,5</b><b class="t n or rt" style="left:2326px;top:535px;transform:scale(0.964,1.05);">50,1</b><b class="t n or rt" style="left:2403px;top:535px;transform:scale(0.964,1.05);">50,3</b><b class="t n or rt" style="left:401px;top:554px;transform:scale(0.959,1.05);">1.158</b><b class="t n or rt" style="left:478px;top:554px;transform:scale(0.959,1.05);">1.136</b><b class="t n or rt" style="left:555px;top:554px;transform:scale(0.959,1.05);">1.004</b><b class="t n or rt" style="left:632px;top:554px;transform:scale(0.964,1.05);">50,3</b><b class="t n or rt" style="left:709px;top:554px;transform:scale(0.964,1.05);">50,2</b><b class="t n or rt" style="left:786px;top:554px;transform:scale(0.964,1.05);">49,9</b><b class="t n or rt" style="left:863px;top:554px;transform:scale(0.964,1.05);">31,3</b><b class="t n or rt" style="left:940px;top:554px;transform:scale(0.964,1.05);">31,1</b><b class="t n or rt" style="left:1017px;top:554px;transform:scale(0.964,1.05);">30,9</b><b class="t n or rt" style="left:1094px;top:554px;transform:scale(0.959,1.05);">1.141</b><b class="t n or rt" style="left:1171px;top:554px;transform:scale(0.959,1.05);">1.110</b><b class="t n or rt" style="left:1248px;top:554px;transform:scale(0.944,1.05);">986</b><b class="t n or rt" style="left:1325px;top:554px;transform:scale(0.944,1.05);">385</b><b class="t n or rt" style="left:1402px;top:554px;transform:scale(0.944,1.05);">367</b><b class="t n or rt" style="left:1479px;top:554px;transform:scale(0.944,1.05);">325</b><b class="t n or rt" style="left:1556px;top:554px;transform:scale(0.944,1.05);">382</b><b class="t n or rt" style="left:1633px;top:554px;transform:scale(0.944,1.05);">376</b><b class="t n or rt" style="left:1710px;top:554px;transform:scale(0.944,1.05);">339</b><b class="t n or rt" style="left:1787px;top:554px;transform:scale(0.944,1.05);">373</b><b class="t n or rt" style="left:1864px;top:554px;transform:scale(0.944,1.05);">368</b><b class="t n or rt" style="left:1941px;top:554px;transform:scale(0.944,1.05);">322</b><b class="t n or rt" style="left:2018px;top:554px;transform:scale(0.964,1.05);">50,4</b><b class="t n or rt" style="left:2095px;top:554px;transform:scale(0.964,1.05);">50,2</b><b class="t n or rt" style="left:2172px;top:554px;transform:scale(0.964,1.05);">49,8</b><b class="t n or rt" style="left:2249px;top:554px;transform:scale(0.964,1.05);">51,5</b><b class="t n or rt" style="left:2326px;top:554px;transform:scale(0.964,1.05);">49,9</b><b class="t n or rt" style="left:2403px;top:554px;transform:scale(0.964,1.05);">49,7</b><b class="t n or rt" style="left:401px;top:573px;transform:scale(0.959,1.05);">7.834</b><b class="t n or rt" style="left:478px;top:573px;transform:scale(0.959,1.05);">7.787</b><b class="t n or rt" style="left:555px;top:573px;transform:scale(0.959,1.05);">6.883</b><b class="t n or rt" style="left:632px;top:573px;transform:scale(0.959,1.05);">100,0</b><b class="t n or rt" style="left:709px;top:573px;transform:scale(0.959,1.05);">100,0</b><b class="t n or rt" style="left:786px;top:573px;transform:scale(0.959,1.05);">100,0</b><b class="t n or rt" style="left:863px;top:573px;transform:scale(0.959,1.05);">100,0</b><b class="t n or rt" style="left:940px;top:573px;transform:scale(0.959,1.05);">100,0</b><b class="t n or rt" style="left:1017px;top:573px;transform:scale(0.959,1.05);">100,0</b><b class="t n or rt" style="left:1094px;top:573px;transform:scale(0.959,1.05);">7.691</b><b class="t n or rt" style="left:1171px;top:573px;transform:scale(0.959,1.05);">7.628</b><b class="t n or rt" style="left:1248px;top:573px;transform:scale(0.959,1.05);">6.757</b><b class="t n or rt" style="left:1325px;top:573px;transform:scale(0.959,1.05);">2.580</b><b class="t n or rt" style="left:1402px;top:573px;transform:scale(0.959,1.05);">2.527</b><b class="t n or rt" style="left:1479px;top:573px;transform:scale(0.959,1.05);">2.266</b><b class="t n or rt" style="left:1556px;top:573px;transform:scale(0.959,1.05);">2.520</b><b class="t n or rt" style="left:1633px;top:573px;transform:scale(0.959,1.05);">2.562</b><b class="t n or rt" style="left:1710px;top:573px;transform:scale(0.959,1.05);">2.237</b><b class="t n or rt" style="left:1787px;top:573px;transform:scale(0.959,1.05);">2.590</b><b class="t n or rt" style="left:1864px;top:573px;transform:scale(0.959,1.05);">2.538</b><b class="t n or rt" style="left:1941px;top:573px;transform:scale(0.959,1.05);">2.254</b><b class="t n or rt" style="left:2018px;top:573px;transform:scale(0.959,1.05);">100,0</b><b class="t n or rt" style="left:2095px;top:573px;transform:scale(0.959,1.05);">100,0</b><b class="t n or rt" style="left:2172px;top:573px;transform:scale(0.959,1.05);">100,0</b><b class="t n or rt" style="left:2249px;top:573px;transform:scale(0.959,1.05);">100,0</b><b class="t n or rt" style="left:2326px;top:573px;transform:scale(0.959,1.05);">100,0</b><b class="t n or rt" style="left:2403px;top:573px;transform:scale(0.959,1.05);">100,0</b><b class="t n or rt" style="left:401px;top:592px;transform:scale(0.959,1.05);">3.925</b><b class="t n or rt" style="left:478px;top:592px;transform:scale(0.959,1.05);">3.922</b><b class="t n or rt" style="left:555px;top:592px;transform:scale(0.959,1.05);">3.446</b><b class="t n or rt" style="left:632px;top:592px;transform:scale(0.964,1.05);">50,1</b><b class="t n or rt" style="left:709px;top:592px;transform:scale(0.964,1.05);">50,4</b><b class="t n or rt" style="left:786px;top:592px;transform:scale(0.964,1.05);">50,1</b><b class="t n or rt" style="left:863px;top:592px;transform:scale(0.964,1.05);">50,1</b><b class="t n or rt" style="left:940px;top:592px;transform:scale(0.964,1.05);">50,4</b><b class="t n or rt" style="left:1017px;top:592px;transform:scale(0.964,1.05);">50,1</b><b class="t n or rt" style="left:1094px;top:592px;transform:scale(0.959,1.05);">3.849</b><b class="t n or rt" style="left:1171px;top:592px;transform:scale(0.959,1.05);">3.846</b><b class="t n or rt" style="left:1248px;top:592px;transform:scale(0.959,1.05);">3.389</b><b class="t n or rt" style="left:1325px;top:592px;transform:scale(0.959,1.05);">1.299</b><b class="t n or rt" style="left:1402px;top:592px;transform:scale(0.959,1.05);">1.285</b><b class="t n or rt" style="left:1479px;top:592px;transform:scale(0.959,1.05);">1.137</b><b class="t n or rt" style="left:1556px;top:592px;transform:scale(0.959,1.05);">1.253</b><b class="t n or rt" style="left:1633px;top:592px;transform:scale(0.959,1.05);">1.271</b><b class="t n or rt" style="left:1710px;top:592px;transform:scale(0.959,1.05);">1.110</b><b class="t n or rt" style="left:1787px;top:592px;transform:scale(0.959,1.05);">1.297</b><b class="t n or rt" style="left:1864px;top:592px;transform:scale(0.959,1.05);">1.290</b><b class="t n or rt" style="left:1941px;top:592px;transform:scale(0.959,1.05);">1.141</b><b class="t n or rt" style="left:2018px;top:592px;transform:scale(0.964,1.05);">50,1</b><b class="t n or rt" style="left:2095px;top:592px;transform:scale(0.964,1.05);">50,4</b><b class="t n or rt" style="left:2172px;top:592px;transform:scale(0.964,1.05);">50,2</b><b class="t n or rt" style="left:2249px;top:592px;transform:scale(0.964,1.05);">50,4</b><b class="t n or rt" style="left:2326px;top:592px;transform:scale(0.964,1.05);">50,9</b><b class="t n or rt" style="left:2403px;top:592px;transform:scale(0.964,1.05);">50,2</b><b class="t n or rt" style="left:401px;top:611px;transform:scale(0.959,1.05);">3.910</b><b class="t n or rt" style="left:478px;top:611px;transform:scale(0.959,1.05);">3.865</b><b class="t n or rt" style="left:555px;top:611px;transform:scale(0.959,1.05);">3.437</b><b class="t n or rt" style="left:632px;top:611px;transform:scale(0.964,1.05);">49,9</b><b class="t n or rt" style="left:709px;top:611px;transform:scale(0.964,1.05);">49,6</b><b class="t n or rt" style="left:786px;top:611px;transform:scale(0.964,1.05);">49,9</b><b class="t n or rt" style="left:863px;top:611px;transform:scale(0.964,1.05);">49,9</b><b class="t n or rt" style="left:940px;top:611px;transform:scale(0.964,1.05);">49,6</b><b class="t n or rt" style="left:1017px;top:611px;transform:scale(0.964,1.05);">49,9</b><b class="t n or rt" style="left:1094px;top:611px;transform:scale(0.959,1.05);">3.841</b><b class="t n or rt" style="left:1171px;top:611px;transform:scale(0.959,1.05);">3.781</b><b class="t n or rt" style="left:1248px;top:611px;transform:scale(0.959,1.05);">3.368</b><b class="t n or rt" style="left:1325px;top:611px;transform:scale(0.959,1.05);">1.281</b><b class="t n or rt" style="left:1402px;top:611px;transform:scale(0.959,1.05);">1.242</b><b class="t n or rt" style="left:1479px;top:611px;transform:scale(0.959,1.05);">1.129</b><b class="t n or rt" style="left:1556px;top:611px;transform:scale(0.959,1.05);">1.268</b><b class="t n or rt" style="left:1633px;top:611px;transform:scale(0.959,1.05);">1.292</b><b class="t n or rt" style="left:1710px;top:611px;transform:scale(0.959,1.05);">1.127</b><b class="t n or rt" style="left:1787px;top:611px;transform:scale(0.959,1.05);">1.293</b><b class="t n or rt" style="left:1864px;top:611px;transform:scale(0.959,1.05);">1.248</b><b class="t n or rt" style="left:1941px;top:611px;transform:scale(0.959,1.05);">1.113</b><b class="t n or rt" style="left:2018px;top:611px;transform:scale(0.964,1.05);">49,9</b><b class="t n or rt" style="left:2095px;top:611px;transform:scale(0.964,1.05);">49,6</b><b class="t n or rt" style="left:2172px;top:611px;transform:scale(0.964,1.05);">49,8</b><b class="t n or rt" style="left:2249px;top:611px;transform:scale(0.964,1.05);">49,6</b><b class="t n or rt" style="left:2326px;top:611px;transform:scale(0.964,1.05);">49,1</b><b class="t n or rt" style="left:2403px;top:611px;transform:scale(0.964,1.05);">49,8</b><b class="t n or rt" style="left:401px;top:630px;transform:scale(0.959,1.05);">8.199</b><b class="t n or rt" style="left:478px;top:630px;transform:scale(0.959,1.05);">8.192</b><b class="t n or rt" style="left:555px;top:630px;transform:scale(0.959,1.05);">7.225</b><b class="t n or rt" style="left:632px;top:630px;transform:scale(0.964,1.05);">34,7</b><b class="t n or rt" style="left:709px;top:630px;transform:scale(0.964,1.05);">34,7</b><b class="t n or rt" style="left:786px;top:630px;transform:scale(0.964,1.05);">30,6</b><b class="t n or rt" style="left:863px;top:630px;transform:scale(0.959,1.05);">100,0</b><b class="t n or rt" style="left:940px;top:630px;transform:scale(0.959,1.05);">100,0</b><b class="t n or rt" style="left:1017px;top:630px;transform:scale(0.959,1.05);">100,0</b><b class="t n or rt" style="left:1094px;top:630px;transform:scale(0.959,1.05);">8.046</b><b class="t n or rt" style="left:1171px;top:630px;transform:scale(0.959,1.05);">8.029</b><b class="t n or rt" style="left:1248px;top:630px;transform:scale(0.959,1.05);">7.092</b><b class="t n or rt" style="left:1325px;top:630px;transform:scale(0.959,1.05);">2.700</b><b class="t n or rt" style="left:1402px;top:630px;transform:scale(0.959,1.05);">2.662</b><b class="t n or rt" style="left:1479px;top:630px;transform:scale(0.959,1.05);">2.382</b><b class="t n or rt" style="left:1556px;top:630px;transform:scale(0.959,1.05);">2.631</b><b class="t n or rt" style="left:1633px;top:630px;transform:scale(0.959,1.05);">2.693</b><b class="t n or rt" style="left:1710px;top:630px;transform:scale(0.959,1.05);">2.349</b><b class="t n or rt" style="left:1787px;top:630px;transform:scale(0.959,1.05);">2.715</b><b class="t n or rt" style="left:1864px;top:630px;transform:scale(0.959,1.05);">2.674</b><b class="t n or rt" style="left:1941px;top:630px;transform:scale(0.959,1.05);">2.361</b><b class="t n or rt" style="left:2018px;top:630px;transform:scale(0.959,1.05);">100,0</b><b class="t n or rt" style="left:2095px;top:630px;transform:scale(0.959,1.05);">100,0</b><b class="t n or rt" style="left:2172px;top:630px;transform:scale(0.959,1.05);">100,0</b><b class="t n or rt" style="left:2249px;top:630px;transform:scale(0.964,1.05);">33,6</b><b class="t n or rt" style="left:2326px;top:630px;transform:scale(0.964,1.05);">33,2</b><b class="t n or rt" style="left:2403px;top:630px;transform:scale(0.964,1.05);">33,6</b><b class="t n or rt" style="left:401px;top:649px;transform:scale(0.959,1.05);">2.295</b><b class="t n or rt" style="left:478px;top:649px;transform:scale(0.959,1.05);">2.294</b><b class="t n or rt" style="left:555px;top:649px;transform:scale(0.959,1.05);">2.045</b><b class="t n or rt" style="left:632px;top:649px;transform:scale(0.964,1.05);">34,6</b><b class="t n or rt" style="left:709px;top:649px;transform:scale(0.964,1.05);">34,6</b><b class="t n or rt" style="left:786px;top:649px;transform:scale(0.964,1.05);">30,8</b><b class="t n or rt" style="left:863px;top:649px;transform:scale(0.964,1.05);">28,0</b><b class="t n or rt" style="left:940px;top:649px;transform:scale(0.964,1.05);">28,0</b><b class="t n or rt" style="left:1017px;top:649px;transform:scale(0.964,1.05);">28,3</b><b class="t n or rt" style="left:1094px;top:649px;transform:scale(0.959,1.05);">2.253</b><b class="t n or rt" style="left:1171px;top:649px;transform:scale(0.959,1.05);">2.251</b><b class="t n or rt" style="left:1248px;top:649px;transform:scale(0.959,1.05);">2.007</b><b class="t n or rt" style="left:1325px;top:649px;transform:scale(0.944,1.05);">763</b><b class="t n or rt" style="left:1402px;top:649px;transform:scale(0.944,1.05);">726</b><b class="t n or rt" style="left:1479px;top:649px;transform:scale(0.944,1.05);">685</b><b class="t n or rt" style="left:1556px;top:649px;transform:scale(0.944,1.05);">724</b><b class="t n or rt" style="left:1633px;top:649px;transform:scale(0.944,1.05);">753</b><b class="t n or rt" style="left:1710px;top:649px;transform:scale(0.944,1.05);">665</b><b class="t n or rt" style="left:1787px;top:649px;transform:scale(0.944,1.05);">766</b><b class="t n or rt" style="left:1864px;top:649px;transform:scale(0.944,1.05);">772</b><b class="t n or rt" style="left:1941px;top:649px;transform:scale(0.944,1.05);">656</b><b class="t n or rt" style="left:2018px;top:649px;transform:scale(0.959,1.05);">100,0</b><b class="t n or rt" style="left:2095px;top:649px;transform:scale(0.959,1.05);">100,0</b><b class="t n or rt" style="left:2172px;top:649px;transform:scale(0.959,1.05);">100,0</b><b class="t n or rt" style="left:2249px;top:649px;transform:scale(0.964,1.05);">33,9</b><b class="t n or rt" style="left:2326px;top:649px;transform:scale(0.964,1.05);">32,2</b><b class="t n or rt" style="left:2403px;top:649px;transform:scale(0.964,1.05);">34,1</b><b class="t n or rt" style="left:401px;top:668px;transform:scale(0.959,1.05);">1.103</b><b class="t n or rt" style="left:478px;top:668px;transform:scale(0.959,1.05);">1.110</b><b class="t n or rt" style="left:555px;top:668px;transform:scale(0.944,1.05);">958</b><b class="t n or rt" style="left:632px;top:668px;transform:scale(0.964,1.05);">34,8</b><b class="t n or rt" style="left:709px;top:668px;transform:scale(0.964,1.05);">35,0</b><b class="t n or rt" style="left:786px;top:668px;transform:scale(0.964,1.05);">30,2</b><b class="t n or rt" style="left:863px;top:668px;transform:scale(0.964,1.05);">13,5</b><b class="t n or rt" style="left:940px;top:668px;transform:scale(0.964,1.05);">13,5</b><b class="t n or rt" style="left:1017px;top:668px;transform:scale(0.964,1.05);">13,3</b><b class="t n or rt" style="left:1094px;top:668px;transform:scale(0.959,1.05);">1.084</b><b class="t n or rt" style="left:1171px;top:668px;transform:scale(0.959,1.05);">1.088</b><b class="t n or rt" style="left:1248px;top:668px;transform:scale(0.944,1.05);">939</b><b class="t n or rt" style="left:1325px;top:668px;transform:scale(0.944,1.05);">352</b><b class="t n or rt" style="left:1402px;top:668px;transform:scale(0.944,1.05);">365</b><b class="t n or rt" style="left:1479px;top:668px;transform:scale(0.944,1.05);">310</b><b class="t n or rt" style="left:1556px;top:668px;transform:scale(0.944,1.05);">361</b><b class="t n or rt" style="left:1633px;top:668px;transform:scale(0.944,1.05);">364</b><b class="t n or rt" style="left:1710px;top:668px;transform:scale(0.944,1.05);">309</b><b class="t n or rt" style="left:1787px;top:668px;transform:scale(0.944,1.05);">371</b><b class="t n or rt" style="left:1864px;top:668px;transform:scale(0.944,1.05);">359</b><b class="t n or rt" style="left:1941px;top:668px;transform:scale(0.944,1.05);">319</b><b class="t n or rt" style="left:2018px;top:668px;transform:scale(0.959,1.05);">100,0</b><b class="t n or rt" style="left:2095px;top:668px;transform:scale(0.959,1.05);">100,0</b><b class="t n or rt" style="left:2172px;top:668px;transform:scale(0.959,1.05);">100,0</b><b class="t n or rt" style="left:2249px;top:668px;transform:scale(0.964,1.05);">32,5</b><b class="t n or rt" style="left:2326px;top:668px;transform:scale(0.964,1.05);">33,6</b><b class="t n or rt" style="left:2403px;top:668px;transform:scale(0.964,1.05);">33,1</b><b class="t n or rt" style="left:401px;top:687px;transform:scale(0.959,1.05);">1.553</b><b class="t n or rt" style="left:478px;top:687px;transform:scale(0.959,1.05);">1.560</b><b class="t n or rt" style="left:555px;top:687px;transform:scale(0.959,1.05);">1.378</b><b class="t n or rt" style="left:632px;top:687px;transform:scale(0.964,1.05);">34,6</b><b class="t n or rt" style="left:709px;top:687px;transform:scale(0.964,1.05);">34,7</b><b class="t n or rt" style="left:786px;top:687px;transform:scale(0.964,1.05);">30,7</b><b class="t n or rt" style="left:863px;top:687px;transform:scale(0.964,1.05);">18,9</b><b class="t n or rt" style="left:940px;top:687px;transform:scale(0.964,1.05);">19,0</b><b class="t n or rt" style="left:1017px;top:687px;transform:scale(0.964,1.05);">19,1</b><b class="t n or rt" style="left:1094px;top:687px;transform:scale(0.959,1.05);">1.522</b><b class="t n or rt" style="left:1171px;top:687px;transform:scale(0.959,1.05);">1.529</b><b class="t n or rt" style="left:1248px;top:687px;transform:scale(0.959,1.05);">1.352</b><b class="t n or rt" style="left:1325px;top:687px;transform:scale(0.944,1.05);">516</b><b class="t n or rt" style="left:1402px;top:687px;transform:scale(0.944,1.05);">515</b><b class="t n or rt" style="left:1479px;top:687px;transform:scale(0.944,1.05);">456</b><b class="t n or rt" style="left:1556px;top:687px;transform:scale(0.944,1.05);">479</b><b class="t n or rt" style="left:1633px;top:687px;transform:scale(0.944,1.05);">519</b><b class="t n or rt" style="left:1710px;top:687px;transform:scale(0.944,1.05);">432</b><b class="t n or rt" style="left:1787px;top:687px;transform:scale(0.944,1.05);">526</b><b class="t n or rt" style="left:1864px;top:687px;transform:scale(0.944,1.05);">495</b><b class="t n or rt" style="left:1941px;top:687px;transform:scale(0.944,1.05);">464</b><b class="t n or rt" style="left:2018px;top:687px;transform:scale(0.959,1.05);">100,0</b><b class="t n or rt" style="left:2095px;top:687px;transform:scale(0.959,1.05);">100,0</b><b class="t n or rt" style="left:2172px;top:687px;transform:scale(0.959,1.05);">100,0</b><b class="t n or rt" style="left:2249px;top:687px;transform:scale(0.964,1.05);">33,9</b><b class="t n or rt" style="left:2326px;top:687px;transform:scale(0.964,1.05);">33,7</b><b class="t n or rt" style="left:2403px;top:687px;transform:scale(0.964,1.05);">33,7</b><b class="t n or rt" style="left:401px;top:706px;transform:scale(0.944,1.05);">708</b><b class="t n or rt" style="left:478px;top:706px;transform:scale(0.944,1.05);">701</b><b class="t n or rt" style="left:555px;top:706px;transform:scale(0.944,1.05);">609</b><b class="t n or rt" style="left:632px;top:706px;transform:scale(0.964,1.05);">35,1</b><b class="t n or rt" style="left:709px;top:706px;transform:scale(0.964,1.05);">34,7</b><b class="t n or rt" style="left:786px;top:706px;transform:scale(0.964,1.05);">30,2</b><b class="t n or rt" style="left:863px;top:706px;transform:scale(0.971,1.05);">8,6</b><b class="t n or rt" style="left:940px;top:706px;transform:scale(0.971,1.05);">8,6</b><b class="t n or rt" style="left:1017px;top:706px;transform:scale(0.971,1.05);">8,4</b><b class="t n or rt" style="left:1094px;top:706px;transform:scale(0.944,1.05);">693</b><b class="t n or rt" style="left:1171px;top:706px;transform:scale(0.944,1.05);">689</b><b class="t n or rt" style="left:1248px;top:706px;transform:scale(0.944,1.05);">597</b><b class="t n or rt" style="left:1325px;top:706px;transform:scale(0.944,1.05);">247</b><b class="t n or rt" style="left:1402px;top:706px;transform:scale(0.944,1.05);">233</b><b class="t n or rt" style="left:1479px;top:706px;transform:scale(0.944,1.05);">203</b><b class="t n or rt" style="left:1556px;top:706px;transform:scale(0.944,1.05);">223</b><b class="t n or rt" style="left:1633px;top:706px;transform:scale(0.944,1.05);">233</b><b class="t n or rt" style="left:1710px;top:706px;transform:scale(0.944,1.05);">205</b><b class="t n or rt" style="left:1787px;top:706px;transform:scale(0.944,1.05);">223</b><b class="t n or rt" style="left:1864px;top:706px;transform:scale(0.944,1.05);">222</b><b class="t n or rt" style="left:1941px;top:706px;transform:scale(0.944,1.05);">189</b><b class="t n or rt" style="left:2018px;top:706px;transform:scale(0.959,1.05);">100,0</b><b class="t n or rt" style="left:2095px;top:706px;transform:scale(0.959,1.05);">100,0</b><b class="t n or rt" style="left:2172px;top:706px;transform:scale(0.959,1.05);">100,0</b><b class="t n or rt" style="left:2249px;top:706px;transform:scale(0.964,1.05);">35,7</b><b class="t n or rt" style="left:2326px;top:706px;transform:scale(0.964,1.05);">33,9</b><b class="t n or rt" style="left:2403px;top:706px;transform:scale(0.964,1.05);">34,0</b><b class="t n or rt" style="left:401px;top:725px;transform:scale(0.959,1.05);">2.538</b><b class="t n or rt" style="left:478px;top:725px;transform:scale(0.959,1.05);">2.527</b><b class="t n or rt" style="left:555px;top:725px;transform:scale(0.959,1.05);">2.235</b><b class="t n or rt" style="left:632px;top:725px;transform:scale(0.964,1.05);">34,8</b><b class="t n or rt" style="left:709px;top:725px;transform:scale(0.964,1.05);">34,6</b><b class="t n or rt" style="left:786px;top:725px;transform:scale(0.964,1.05);">30,6</b><b class="t n or rt" style="left:863px;top:725px;transform:scale(0.964,1.05);">31,0</b><b class="t n or rt" style="left:940px;top:725px;transform:scale(0.964,1.05);">30,8</b><b class="t n or rt" style="left:1017px;top:725px;transform:scale(0.964,1.05);">30,9</b><b class="t n or rt" style="left:1094px;top:725px;transform:scale(0.959,1.05);">2.495</b><b class="t n or rt" style="left:1171px;top:725px;transform:scale(0.959,1.05);">2.472</b><b class="t n or rt" style="left:1248px;top:725px;transform:scale(0.959,1.05);">2.196</b><b class="t n or rt" style="left:1325px;top:725px;transform:scale(0.944,1.05);">822</b><b class="t n or rt" style="left:1402px;top:725px;transform:scale(0.944,1.05);">822</b><b class="t n or rt" style="left:1479px;top:725px;transform:scale(0.944,1.05);">727</b><b class="t n or rt" style="left:1556px;top:725px;transform:scale(0.944,1.05);">844</b><b class="t n or rt" style="left:1633px;top:725px;transform:scale(0.944,1.05);">824</b><b class="t n or rt" style="left:1710px;top:725px;transform:scale(0.944,1.05);">737</b><b class="t n or rt" style="left:1787px;top:725px;transform:scale(0.944,1.05);">829</b><b class="t n or rt" style="left:1864px;top:725px;transform:scale(0.944,1.05);">826</b><b class="t n or rt" style="left:1941px;top:725px;transform:scale(0.944,1.05);">732</b><b class="t n or rt" style="left:2018px;top:725px;transform:scale(0.959,1.05);">100,0</b><b class="t n or rt" style="left:2095px;top:725px;transform:scale(0.959,1.05);">100,0</b><b class="t n or rt" style="left:2172px;top:725px;transform:scale(0.959,1.05);">100,0</b><b class="t n or rt" style="left:2249px;top:725px;transform:scale(0.964,1.05);">32,9</b><b class="t n or rt" style="left:2326px;top:725px;transform:scale(0.964,1.05);">33,3</b><b class="t n or rt" style="left:2403px;top:725px;transform:scale(0.964,1.05);">33,1</b><b class="fn" style="left:52px;top:762px;transform:scale(0.985,1);transform-origin:0 13px;">This is footnote number 1</b><b class="fn" style="left:52px;top:781px;transform:scale(0.985,1);transform-origin:0 13px;">This is footnote number 2</b><b class="fn lk" style="left:52px;top:800px;transform:scale(0.985,1);transform-origin:0 13px;"><u>This is footnote number 3&nbsp;</u></b>
</body></html>
